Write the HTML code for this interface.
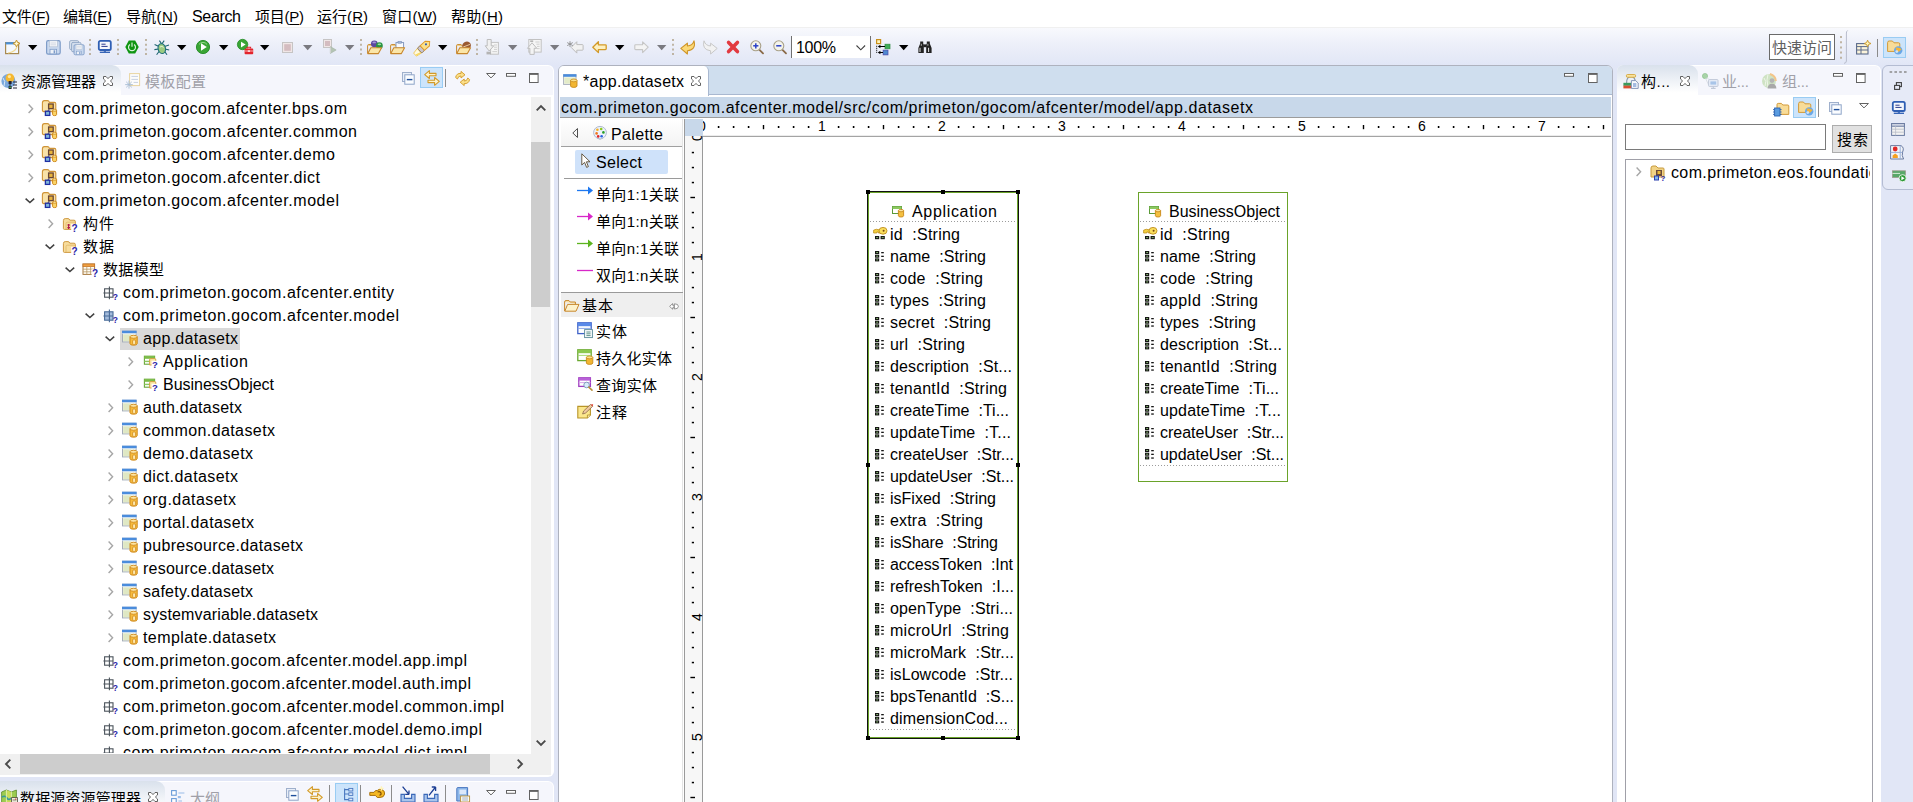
<!DOCTYPE html>
<html lang="zh"><head><meta charset="utf-8"><title>EOS Studio</title>
<style>
html,body{margin:0;padding:0;background:#e1e6f6;}
#root{position:relative;width:1913px;height:802px;overflow:hidden;background:#e1e6f6;font-family:"Liberation Sans","Noto Sans CJK SC",sans-serif;font-size:16px;color:#000;}
#root *{box-sizing:border-box;}
.a{position:absolute;}
.t{position:absolute;white-space:pre;}
svg{position:absolute;overflow:visible;}
u{text-decoration:underline;text-underline-offset:2px;}
</style></head><body><div id="root">
<div class="a" style="left:0px;top:0px;width:1913px;height:28px;background:#fff;border-bottom:1px solid #f0f0f0;"></div>
<span class="t" style="left:2px;top:6px;line-height:22px;font-size:15px;letter-spacing:-0.289px;">文件(<u>F</u>)</span>
<span class="t" style="left:63px;top:6px;line-height:22px;font-size:15px;letter-spacing:-0.250px;">编辑(<u>E</u>)</span>
<span class="t" style="left:126px;top:6px;line-height:22px;font-size:15px;letter-spacing:0.293px;">导航(<u>N</u>)</span>
<span class="t" style="left:192px;top:6px;line-height:22px;font-size:16px;letter-spacing:-0.341px;">Search</span>
<span class="t" style="left:255px;top:6px;line-height:22px;font-size:15px;letter-spacing:-0.250px;">项目(<u>P</u>)</span>
<span class="t" style="left:317px;top:6px;line-height:22px;font-size:15px;letter-spacing:0.043px;">运行(<u>R</u>)</span>
<span class="t" style="left:382px;top:6px;line-height:22px;font-size:15px;letter-spacing:0.211px;">窗口(<u>W</u>)</span>
<span class="t" style="left:451px;top:6px;line-height:22px;font-size:15px;letter-spacing:0.293px;">帮助(<u>H</u>)</span>
<div class="a" style="left:0px;top:28px;width:1913px;height:38px;background:linear-gradient(#f8f9fd 0%,#eceff9 45%,#e1e6f6 100%);"></div>
<svg style="left:5px;top:40px" width="16" height="15" viewBox="0 0 16 15"><rect x="0.6" y="2.6" width="13" height="11" fill="#f4f8fd" stroke="#a88a50" stroke-width="1.2"/><rect x="0.6" y="2.2" width="11" height="2.2" fill="#4a90d8"/><path d="M11.5 0 L12.6 2.4 L15 3.5 L12.6 4.6 L11.5 7 L10.4 4.6 L8 3.5 L10.4 2.4 Z" fill="#fff8d0" stroke="#c89628" stroke-width="1"/><path d="M3 13 Q10 12 12 7" fill="none" stroke="#f0d890" stroke-width="1.2"/></svg>
<svg style="left:28px;top:45px" width="10" height="6" viewBox="0 0 10 6"><path d="M0 0 H9.4 L4.7 5.2 Z" fill="#000"/></svg>
<svg style="left:46px;top:40px" width="15" height="15" viewBox="0 0 15 15"><g transform="translate(0,0) scale(1.0)"><rect x="0.6" y="0.6" width="13.6" height="13.6" rx="1.6" fill="#c9d8ee" stroke="#7e9cc8" stroke-width="1.2"/><rect x="3.3" y="0.8" width="8" height="6" fill="#f3f5f8" stroke="#aebcd0" stroke-width="0.6"/><path d="M4.5 3 H10 M4.5 4.8 H10" stroke="#c8d0dc" stroke-width="0.7"/><rect x="4" y="9.3" width="6.6" height="4.6" fill="#eef2f8" stroke="#7e9cc8" stroke-width="0.8"/><rect x="7.6" y="10.3" width="1.6" height="3" fill="#7e9cc8"/></g></svg>
<svg style="left:68.5px;top:40px" width="16" height="15" viewBox="0 0 16 15"><rect x="0.6" y="0.6" width="9" height="9" rx="1.4" fill="#dbe4f0" stroke="#9fb2cc" stroke-width="1"/><rect x="2.6" y="2.4" width="9.4" height="9.4" rx="1.4" fill="#d3deed" stroke="#93a9c8" stroke-width="1"/><g transform="translate(4.6,4.3) scale(0.74)"><rect x="0.6" y="0.6" width="13.6" height="13.6" rx="1.6" fill="#c9d8ee" stroke="#7e9cc8" stroke-width="1.2"/><rect x="3.3" y="0.8" width="8" height="6" fill="#f3f5f8" stroke="#aebcd0" stroke-width="0.6"/><path d="M4.5 3 H10 M4.5 4.8 H10" stroke="#c8d0dc" stroke-width="0.7"/><rect x="4" y="9.3" width="6.6" height="4.6" fill="#eef2f8" stroke="#7e9cc8" stroke-width="0.8"/><rect x="7.6" y="10.3" width="1.6" height="3" fill="#7e9cc8"/></g></svg>
<svg style="left:89px;top:39px" width="2" height="16" viewBox="0 0 2 16"><path d="M1 0 V16" stroke="#b4a78f" stroke-width="1.6" stroke-dasharray="2 2.7"/></svg>
<svg style="left:97.5px;top:40px" width="14" height="14" viewBox="0 0 14 14"><rect x="0.8" y="0.8" width="12" height="9.2" rx="1.6" fill="#f4f7fc" stroke="#2f5fb4" stroke-width="1.8"/><path d="M3.4 4.2 H7.6 M3.4 6.4 H9.6" stroke="#2a3a8c" stroke-width="1"/><path d="M5.8 10.6 H8 V11.8 H5.8Z" fill="#2f5fb4"/><path d="M1.8 12.3 H12" stroke="#2f5fb4" stroke-width="1.3"/></svg>
<svg style="left:117px;top:39px" width="2" height="16" viewBox="0 0 2 16"><path d="M1 0 V16" stroke="#b4a78f" stroke-width="1.6" stroke-dasharray="2 2.7"/></svg>
<svg style="left:124.5px;top:40px" width="14" height="14" viewBox="0 0 14 14"><path d="M3.8 0.6 H10.2 L13.7 7 L10.2 13.4 H3.8 L0.3 7 Z" fill="#0f9512"/><path d="M4.9 4.4 A3.5 3.5 0 1 0 9.1 4.4" fill="none" stroke="#d8f2d8" stroke-width="1.2"/><path d="M7 2.6 V6.8" stroke="#d8f2d8" stroke-width="1.2"/></svg>
<svg style="left:145px;top:39px" width="2" height="16" viewBox="0 0 2 16"><path d="M1 0 V16" stroke="#b4a78f" stroke-width="1.6" stroke-dasharray="2 2.7"/></svg>
<svg style="left:153.5px;top:39.5px" width="16" height="16" viewBox="0 0 16 16"><path d="M7.8 4 L5.4 0.6 M7.8 4 L10.2 0.6 M5 6.5 L0.6 4.6 M4.6 9 L0.4 9.6 M5 11.5 L2.6 14.8 M10.6 6.5 L15 5 M11 9 L15.2 10 M10.6 11.5 L13 14.8" stroke="#1c6470" stroke-width="1.1" fill="none"/><ellipse cx="7.8" cy="8.6" rx="3.7" ry="5" fill="#9ccb80" stroke="#23737c" stroke-width="1.1" transform="rotate(-14 7.8 8.6)"/><path d="M6 7 Q8 5.6 9.6 7.4" stroke="#e8f4d8" stroke-width="1" fill="none"/></svg>
<svg style="left:176.7px;top:45px" width="10" height="6" viewBox="0 0 10 6"><path d="M0 0 H9.4 L4.7 5.2 Z" fill="#000"/></svg>
<svg style="left:196px;top:40px" width="14" height="14" viewBox="0 0 14 14"><circle cx="7" cy="7" r="6.6" fill="#3aa535" stroke="#238b25" stroke-width="0.9"/><path d="M3 4.4 A5 5 0 0 1 11 4.4" stroke="#8fd688" stroke-width="1" fill="none"/><path d="M5 3.2 L10.8 7 L5 10.8 Z" fill="#fff"/></svg>
<svg style="left:218.5px;top:45px" width="10" height="6" viewBox="0 0 10 6"><path d="M0 0 H9.4 L4.7 5.2 Z" fill="#000"/></svg>
<svg style="left:236.5px;top:38.8px" width="17" height="16" viewBox="0 0 17 16"><circle cx="5.6" cy="5.5" r="5.2" fill="#3aa535" stroke="#238b25" stroke-width="0.8"/><path d="M4 2.8 L8.6 5.6 L4 8.4 Z" fill="#fff"/><rect x="7.6" y="9.6" width="8.6" height="5.6" rx="0.8" fill="#e3242c"/><path d="M10.2 9.6 V8.2 H13.6 V9.6" fill="none" stroke="#e3242c" stroke-width="1.1"/><path d="M7.6 12 H16.2" stroke="#ffd2d2" stroke-width="0.8"/><rect x="10.8" y="11.2" width="2.2" height="1.8" fill="#ffd2d2"/></svg>
<svg style="left:260.4px;top:45px" width="10" height="6" viewBox="0 0 10 6"><path d="M0 0 H9.4 L4.7 5.2 Z" fill="#000"/></svg>
<svg style="left:281.5px;top:42px" width="11" height="11" viewBox="0 0 11 11"><rect x="0.5" y="0.5" width="10" height="10" fill="#f0e6e6" stroke="#c6c4c4" stroke-width="1"/><rect x="2.2" y="2.2" width="6.6" height="6.6" fill="#d4bcc0"/></svg>
<svg style="left:303px;top:45px" width="10" height="6" viewBox="0 0 10 6"><path d="M0 0 H9.4 L4.7 5.2 Z" fill="#7a7a80"/></svg>
<svg style="left:323px;top:39px" width="15" height="15" viewBox="0 0 15 15"><rect x="0.5" y="0.5" width="8" height="8" fill="#f0e6e6" stroke="#c6c4c4" stroke-width="1"/><rect x="2" y="2" width="5" height="5" fill="#d4bcc0"/><path d="M7.4 7.6 L13.2 11 L7.4 14.4 Z" fill="#b4c4b4" stroke="#a4b4a4" stroke-width="0.6"/><path d="M7.4 8.4 V14" stroke="#d4d4d4" stroke-width="1"/></svg>
<svg style="left:344.7px;top:45px" width="10" height="6" viewBox="0 0 10 6"><path d="M0 0 H9.4 L4.7 5.2 Z" fill="#7a7a80"/></svg>
<svg style="left:360px;top:39px" width="2" height="16" viewBox="0 0 2 16"><path d="M1 0 V16" stroke="#b4a78f" stroke-width="1.6" stroke-dasharray="2 2.7"/></svg>
<svg style="left:367px;top:40.5px" width="16" height="14" viewBox="0 0 16 14"><path d="M0.6 4.6 Q0.6 3.6 1.6 3.6 H5.2 L6.4 5 H11.4 V7" fill="#f3d289" stroke="#c8872c" stroke-width="1"/><circle cx="7.3" cy="2.8" r="3.4" fill="#5c48a0"/><ellipse cx="7.2" cy="1.4" rx="1.8" ry="0.9" fill="#a898d8"/><circle cx="12.4" cy="4.7" r="3.4" fill="#2a9442"/><ellipse cx="12.4" cy="3.3" rx="1.8" ry="0.9" fill="#9fdca8"/><path d="M0.8 12.6 L3.8 6.8 H14.6 L11.4 12.6 Z" fill="#fbe6a8" stroke="#c8872c" stroke-width="1.1" stroke-linejoin="round"/><path d="M0.6 4.6 V12.4" stroke="#c8872c" stroke-width="1"/></svg>
<svg style="left:389.5px;top:40.5px" width="16" height="14" viewBox="0 0 16 14"><path d="M0.6 4.6 Q0.6 3.6 1.6 3.6 H5.2 L6.4 5 H11.4 V7" fill="#f3d289" stroke="#c8872c" stroke-width="1"/><rect x="6" y="1.6" width="7.6" height="5.6" fill="#f8fafc" stroke="#7a90b8" stroke-width="0.9"/><rect x="8" y="0.4" width="3.6" height="1.8" fill="#a8b8d8" stroke="#7a90b8" stroke-width="0.6"/><path d="M0.8 12.6 L3.8 6.8 H14.6 L11.4 12.6 Z" fill="#fbe6a8" stroke="#c8872c" stroke-width="1.1" stroke-linejoin="round"/><path d="M0.6 4.6 V12.4" stroke="#c8872c" stroke-width="1"/></svg>
<svg style="left:413.5px;top:39.5px" width="17" height="16" viewBox="0 0 17 16"><g transform="translate(1.3,14.4) rotate(-42) scale(0.93)"><path d="M-0.4 -2.2 L6 -3.3 V3.3 L-0.4 2.2 Z" fill="#fffbe0" stroke="#f0c040" stroke-width="0.8"/><path d="M0 1 L6 2.6" stroke="#f8d860" stroke-width="1.4"/><rect x="6" y="-3.6" width="4.2" height="7.2" rx="1.4" fill="#c9c5d2" stroke="#8a6a3a" stroke-width="0.8"/><path d="M10.2 -3.4 H17.4 L20.8 0 L17.4 3.4 H10.2 Z" fill="#fbe08a" stroke="#e09a28" stroke-width="1"/><circle cx="15.8" cy="-0.4" r="1.1" fill="#2858b8"/></g></svg>
<svg style="left:437.8px;top:45px" width="10" height="6" viewBox="0 0 10 6"><path d="M0 0 H9.4 L4.7 5.2 Z" fill="#000"/></svg>
<svg style="left:456px;top:40.5px" width="16" height="14" viewBox="0 0 16 14"><path d="M0.6 4.6 Q0.6 3.6 1.6 3.6 H5.2 L6.4 5 H11.4 V7" fill="#f3d289" stroke="#c8872c" stroke-width="1"/><ellipse cx="10.6" cy="4.6" rx="4.4" ry="4" fill="#9a5a32" transform="rotate(-25 10.6 4.6)"/><path d="M7.2 6 L14 3.4" stroke="#e8c8a0" stroke-width="1"/><path d="M0.8 12.6 L3.8 6.8 H14.6 L11.4 12.6 Z" fill="#fbe6a8" stroke="#c8872c" stroke-width="1.1" stroke-linejoin="round"/><path d="M0.6 4.6 V12.4" stroke="#c8872c" stroke-width="1"/></svg>
<svg style="left:476px;top:39px" width="2" height="16" viewBox="0 0 2 16"><path d="M1 0 V16" stroke="#b4a78f" stroke-width="1.6" stroke-dasharray="2 2.7"/></svg>
<svg style="left:485px;top:39px" width="14" height="16" viewBox="0 0 14 16"><rect x="5.6" y="3.4" width="7.8" height="11.8" fill="#f6f6f6" stroke="#c2c2c2" stroke-width="1"/><path d="M9 6 H12 M9 8.2 H12 M9 10.4 H12 M7.4 12.6 H12" stroke="#cccccc" stroke-width="0.9"/><path d="M2.2 0.5 H6.2 V6.8 H8.8 L4.2 12 L0.2 6.8 H2.2 Z" fill="#f0f0f0" stroke="#b8b8b8" stroke-width="0.9" stroke-linejoin="round"/><rect x="1.5" y="12.7" width="4.4" height="2.7" fill="#b4b4b4"/></svg>
<svg style="left:507.7px;top:45px" width="10" height="6" viewBox="0 0 10 6"><path d="M0 0 H9.4 L4.7 5.2 Z" fill="#7a7a80"/></svg>
<svg style="left:526.5px;top:39px" width="15" height="16" viewBox="0 0 15 16"><rect x="1.8" y="0.5" width="12.4" height="12.6" fill="#f6f6f6" stroke="#c2c2c2" stroke-width="1"/><path d="M8.4 3 H12.6 M9.4 5.2 H12.6 M10 7.4 H12.6 M10 9.6 H12.6" stroke="#cccccc" stroke-width="0.9"/><rect x="3.2" y="1.4" width="3" height="1.6" fill="#b4b4b4"/><path d="M5 3.8 L9.8 9.3 H7.2 V15.4 H2.9 V9.3 H0.5 Z" fill="#f4f4f4" stroke="#b8b8b8" stroke-width="0.9" stroke-linejoin="round"/></svg>
<svg style="left:550.1px;top:45px" width="10" height="6" viewBox="0 0 10 6"><path d="M0 0 H9.4 L4.7 5.2 Z" fill="#7a7a80"/></svg>
<svg style="left:566.5px;top:40.5px" width="17" height="13" viewBox="0 0 17 13"><path d="M4.2 6.4 L9.8 0.7 V3.6 H15.4 Q16.1 3.6 16.1 4.3 V8.5 Q16.1 9.2 15.4 9.2 H9.8 V12.1 Z" fill="#f2f2f2" stroke="#bdbdbd" stroke-width="1" stroke-linejoin="round"/><path d="M3 0.2 V6 M0.2 1.6 L5.8 4.6 M5.8 1.6 L0.2 4.6" stroke="#8c8c8c" stroke-width="0.9"/></svg>
<svg style="left:591.5px;top:40.5px" width="15" height="13" viewBox="0 0 15 13"><path d="M0.8 6.2 L6.4 0.8 V3.8 H13.4 Q14.2 3.8 14.2 4.6 V7.8 Q14.2 8.6 13.4 8.6 H6.4 V11.6 Z" fill="#fdf0c0" stroke="#d39a28" stroke-width="1.3" stroke-linejoin="round"/></svg>
<svg style="left:614.8px;top:45px" width="10" height="6" viewBox="0 0 10 6"><path d="M0 0 H9.4 L4.7 5.2 Z" fill="#000"/></svg>
<svg style="left:634px;top:40.5px" width="15" height="13" viewBox="0 0 15 13"><path d="M14.2 6.2 L8.6 0.8 V3.8 H1.6 Q0.8 3.8 0.8 4.6 V7.8 Q0.8 8.6 1.6 8.6 H8.6 V11.6 Z" fill="#f4f4f4" stroke="#c6c6c6" stroke-width="1.1" stroke-linejoin="round"/></svg>
<svg style="left:656.7px;top:45px" width="10" height="6" viewBox="0 0 10 6"><path d="M0 0 H9.4 L4.7 5.2 Z" fill="#7a7a80"/></svg>
<svg style="left:672px;top:39px" width="2" height="16" viewBox="0 0 2 16"><path d="M1 0 V16" stroke="#b4a78f" stroke-width="1.6" stroke-dasharray="2 2.7"/></svg>
<svg style="left:679.5px;top:39.5px" width="16" height="15" viewBox="0 0 16 15"><path d="M0.8 8.4 L7.4 3.2 V6 Q12.6 5.6 14 0.8 Q16.4 9.6 7.4 10.8 V14 Z" fill="#fbd978" stroke="#cf9528" stroke-width="1.1" stroke-linejoin="round"/></svg>
<svg style="left:701.5px;top:39.5px" width="16" height="15" viewBox="0 0 16 15"><path d="M15.2 8.4 L8.6 3.2 V6 Q3.4 5.6 2 0.8 Q-0.4 9.6 8.6 10.8 V14 Z" fill="#f2f2f2" stroke="#c8c8c8" stroke-width="1" stroke-linejoin="round"/></svg>
<svg style="left:726px;top:40px" width="14" height="14" viewBox="0 0 14 14"><path d="M2.6 2.4 L11.4 11.6 M11.4 2.4 L2.6 11.6" stroke="#e23a40" stroke-width="3.6" stroke-linecap="round"/></svg>
<svg style="left:749.7px;top:39.9px" width="14" height="14" viewBox="0 0 14 14"><path d="M9 9.4 L13 13.4" stroke="#8a6a48" stroke-width="1.8" stroke-linecap="round"/><circle cx="5.8" cy="5.8" r="5" fill="#f4f4ec" stroke="#a8a088" stroke-width="1.1"/><path d="M3.2 5.8 H8.4" stroke="#2a40c8" stroke-width="1.5"/><path d="M5.8 3.2 V8.4" stroke="#2a40c8" stroke-width="1.5"/></svg>
<svg style="left:772.9px;top:39.9px" width="14" height="14" viewBox="0 0 14 14"><path d="M9 9.4 L13 13.4" stroke="#8a6a48" stroke-width="1.8" stroke-linecap="round"/><circle cx="5.8" cy="5.8" r="5" fill="#f4f4ec" stroke="#a8a088" stroke-width="1.1"/><path d="M3.2 5.8 H8.4" stroke="#2a40c8" stroke-width="1.5"/></svg>
<div class="a" style="left:791px;top:36px;width:80px;height:22px;background:#fff;border-left:1px solid #707070;border-right:1px solid #707070;"></div>
<span class="t" style="left:796px;top:36.5px;line-height:22px;font-size:16px;letter-spacing:-0.307px;">100%</span>
<svg style="left:856px;top:45px" width="10" height="6" viewBox="0 0 10 6"><path d="M0.5 0.5 L4.8 4.8 L9.1 0.5" fill="none" stroke="#404040" stroke-width="1.1"/></svg>
<svg style="left:876px;top:39px" width="15" height="16" viewBox="0 0 15 16"><rect x="0.6" y="0.6" width="4" height="4" fill="#fff3b8" stroke="#c8901c" stroke-width="1.2"/><rect x="9" y="5.2" width="5" height="4.6" fill="#3fae58" stroke="#2f8a40" stroke-width="0.7"/><rect x="7.1" y="11.1" width="4.9" height="4.8" fill="#4f8ad0" stroke="#4848a8" stroke-width="0.7"/><path d="M0.7 6.8 V14.6" stroke="#000" stroke-width="1" stroke-dasharray="1 1"/><path d="M9 7.5 H3.6 M7 13.5 H3.6" stroke="#000" stroke-width="1.1"/><path d="M1.8 7.5 L4.4 5.8 V9.2 Z M1.8 13.5 L4.4 11.8 V15.2 Z" fill="#000"/></svg>
<svg style="left:898.7px;top:45px" width="10" height="6" viewBox="0 0 10 6"><path d="M0 0 H9.4 L4.7 5.2 Z" fill="#000"/></svg>
<svg style="left:917.5px;top:41px" width="14" height="12" viewBox="0 0 14 12"><path d="M0.4 12 V7 L2.2 2.6 V0.4 H5.2 V2.6 L5.8 4 V12 Z M13.6 12 V7 L11.8 2.6 V0.4 H8.8 V2.6 L8.2 4 V12 Z" fill="#222"/><rect x="5.4" y="3.4" width="3.2" height="2.8" fill="#222"/><path d="M2 6.8 V11 M10.6 6.8 V11" stroke="#fff" stroke-width="0.9"/><path d="M3.3 2.8 V4.8 M9.9 2.8 V4.8" stroke="#eee" stroke-width="0.7"/></svg>
<div class="a" style="left:1769px;top:34px;width:66px;height:26px;background:#fff;border:1px solid #6a6a6a;"></div>
<span class="t" style="left:1772px;top:37px;line-height:22px;font-size:15px;letter-spacing:-0.005px;color:#606060;">快速访问</span>
<svg style="left:1840px;top:36px" width="2" height="24" viewBox="0 0 2 24"><path d="M1 0 V24" stroke="#b4a78f" stroke-width="1.6" stroke-dasharray="2 3.2"/></svg>
<svg style="left:1843px;top:30px" width="6" height="34" viewBox="0 0 6 34"><path d="M4.6 0.5 Q3.4 1.4 3.4 3 V31 Q3.4 33 1 33.4" fill="none" stroke="#b8bccc" stroke-width="1"/></svg>
<svg style="left:1856px;top:40px" width="16" height="15" viewBox="0 0 16 15"><rect x="0.6" y="3.6" width="11.4" height="10.4" fill="#fbf3da" stroke="#5a6a8a" stroke-width="1.1"/><path d="M0.6 6.6 H12 M0.6 10 H12 M5 6.6 V14" stroke="#5a6a8a" stroke-width="1"/><path d="M11.6 0.2 L12.6 2.5 L15 3.5 L12.6 4.5 L11.6 6.8 L10.6 4.5 L8.2 3.5 L10.6 2.5 Z" fill="#fff4b8" stroke="#c89628" stroke-width="0.9"/></svg>
<div class="a" style="left:1877px;top:39px;width:1px;height:18px;background:#8a8a8a;"></div>
<div class="a" style="left:1883px;top:37px;width:23px;height:21px;background:#cce4fb;border:1px solid #99ccf3;"></div>
<div class="a" style="left:0px;top:65px;width:554px;height:712px;background:#fff;border-radius:0 6px 6px 0;"></div>
<div class="a" style="left:0px;top:66px;width:553px;height:29px;background:#f5f6fc;border-radius:0 5px 0 0;"></div>
<div class="a" style="left:0px;top:65px;width:121px;height:30px;background:linear-gradient(#d9e1ec,#fff 92%);border-radius:0 9px 0 0;"></div>
<span class="t" style="left:21px;top:71px;line-height:22px;font-size:15px;letter-spacing:-0.004px;">资源管理器</span>
<span class="t" style="left:145px;top:71px;line-height:22px;font-size:15px;letter-spacing:0.328px;color:#a0a0a8;">模板配置</span>
<div class="a" style="left:0;top:96px;width:531px;height:657px;overflow:hidden;">
<svg style="left:27.8px;top:7.7px" width="6" height="10" viewBox="0 0 6 10"><path d="M0.6 0.6 L4.6 4.8 L0.6 9" fill="none" stroke="#a6a6a6" stroke-width="1.4"/></svg>
<svg style="left:41px;top:4.0px" width="18" height="16" viewBox="0 0 18 16"><path d="M1.4 3 Q1.4 0.6 3.4 0.6 H6.4 Q8 0.6 8.4 2.4 H13.4 Q14.8 2.4 14.8 3.8 V10 Q14.8 11.6 13.4 11.6 H2.8 Q1.4 11.6 1.4 10 Z" fill="#f9e2a8" stroke="#cf9438" stroke-width="1.1"/><path d="M9 8 L6.6 11.4" stroke="#3a3a6a" stroke-width="1"/><rect x="7.6" y="4" width="4.6" height="4.6" fill="#e8b43c" stroke="#6a4634" stroke-width="1.3"/><rect x="4.4" y="11.2" width="4.4" height="4.2" fill="#7fb4d8" stroke="#1f2fa4" stroke-width="1.3"/><path d="M11.6 10.4 V14.6 Q11.6 15.6 13.6 15.6 Q15.6 15.6 15.6 14.6 V10.4 Z" fill="#fbd468" stroke="#cf8a1c" stroke-width="1"/><ellipse cx="13.6" cy="10.2" rx="2" ry="1" fill="#fdeeb8" stroke="#cf8a1c" stroke-width="0.9"/></svg>
<span class="t" style="left:63px;top:1px;line-height:23px;font-size:16px;letter-spacing:0.494px;">com.primeton.gocom.afcenter.bps.om</span>
<svg style="left:27.8px;top:30.7px" width="6" height="10" viewBox="0 0 6 10"><path d="M0.6 0.6 L4.6 4.8 L0.6 9" fill="none" stroke="#a6a6a6" stroke-width="1.4"/></svg>
<svg style="left:41px;top:27.0px" width="18" height="16" viewBox="0 0 18 16"><path d="M1.4 3 Q1.4 0.6 3.4 0.6 H6.4 Q8 0.6 8.4 2.4 H13.4 Q14.8 2.4 14.8 3.8 V10 Q14.8 11.6 13.4 11.6 H2.8 Q1.4 11.6 1.4 10 Z" fill="#f9e2a8" stroke="#cf9438" stroke-width="1.1"/><path d="M9 8 L6.6 11.4" stroke="#3a3a6a" stroke-width="1"/><rect x="7.6" y="4" width="4.6" height="4.6" fill="#e8b43c" stroke="#6a4634" stroke-width="1.3"/><rect x="4.4" y="11.2" width="4.4" height="4.2" fill="#7fb4d8" stroke="#1f2fa4" stroke-width="1.3"/><path d="M11.6 10.4 V14.6 Q11.6 15.6 13.6 15.6 Q15.6 15.6 15.6 14.6 V10.4 Z" fill="#fbd468" stroke="#cf8a1c" stroke-width="1"/><ellipse cx="13.6" cy="10.2" rx="2" ry="1" fill="#fdeeb8" stroke="#cf8a1c" stroke-width="0.9"/></svg>
<span class="t" style="left:63px;top:24px;line-height:23px;font-size:16px;letter-spacing:0.528px;">com.primeton.gocom.afcenter.common</span>
<svg style="left:27.8px;top:53.7px" width="6" height="10" viewBox="0 0 6 10"><path d="M0.6 0.6 L4.6 4.8 L0.6 9" fill="none" stroke="#a6a6a6" stroke-width="1.4"/></svg>
<svg style="left:41px;top:50.0px" width="18" height="16" viewBox="0 0 18 16"><path d="M1.4 3 Q1.4 0.6 3.4 0.6 H6.4 Q8 0.6 8.4 2.4 H13.4 Q14.8 2.4 14.8 3.8 V10 Q14.8 11.6 13.4 11.6 H2.8 Q1.4 11.6 1.4 10 Z" fill="#f9e2a8" stroke="#cf9438" stroke-width="1.1"/><path d="M9 8 L6.6 11.4" stroke="#3a3a6a" stroke-width="1"/><rect x="7.6" y="4" width="4.6" height="4.6" fill="#e8b43c" stroke="#6a4634" stroke-width="1.3"/><rect x="4.4" y="11.2" width="4.4" height="4.2" fill="#7fb4d8" stroke="#1f2fa4" stroke-width="1.3"/><path d="M11.6 10.4 V14.6 Q11.6 15.6 13.6 15.6 Q15.6 15.6 15.6 14.6 V10.4 Z" fill="#fbd468" stroke="#cf8a1c" stroke-width="1"/><ellipse cx="13.6" cy="10.2" rx="2" ry="1" fill="#fdeeb8" stroke="#cf8a1c" stroke-width="0.9"/></svg>
<span class="t" style="left:63px;top:47px;line-height:23px;font-size:16px;letter-spacing:0.541px;">com.primeton.gocom.afcenter.demo</span>
<svg style="left:27.8px;top:76.7px" width="6" height="10" viewBox="0 0 6 10"><path d="M0.6 0.6 L4.6 4.8 L0.6 9" fill="none" stroke="#a6a6a6" stroke-width="1.4"/></svg>
<svg style="left:41px;top:73.0px" width="18" height="16" viewBox="0 0 18 16"><path d="M1.4 3 Q1.4 0.6 3.4 0.6 H6.4 Q8 0.6 8.4 2.4 H13.4 Q14.8 2.4 14.8 3.8 V10 Q14.8 11.6 13.4 11.6 H2.8 Q1.4 11.6 1.4 10 Z" fill="#f9e2a8" stroke="#cf9438" stroke-width="1.1"/><path d="M9 8 L6.6 11.4" stroke="#3a3a6a" stroke-width="1"/><rect x="7.6" y="4" width="4.6" height="4.6" fill="#e8b43c" stroke="#6a4634" stroke-width="1.3"/><rect x="4.4" y="11.2" width="4.4" height="4.2" fill="#7fb4d8" stroke="#1f2fa4" stroke-width="1.3"/><path d="M11.6 10.4 V14.6 Q11.6 15.6 13.6 15.6 Q15.6 15.6 15.6 14.6 V10.4 Z" fill="#fbd468" stroke="#cf8a1c" stroke-width="1"/><ellipse cx="13.6" cy="10.2" rx="2" ry="1" fill="#fdeeb8" stroke="#cf8a1c" stroke-width="0.9"/></svg>
<span class="t" style="left:63px;top:70px;line-height:23px;font-size:16px;letter-spacing:0.545px;">com.primeton.gocom.afcenter.dict</span>
<svg style="left:24.5px;top:102.3px" width="10" height="6" viewBox="0 0 10 6"><path d="M0.6 0.6 L4.9 4.6 L9.2 0.6" fill="none" stroke="#404040" stroke-width="1.5"/></svg>
<svg style="left:41px;top:96.0px" width="18" height="16" viewBox="0 0 18 16"><path d="M1.4 3 Q1.4 0.6 3.4 0.6 H6.4 Q8 0.6 8.4 2.4 H13.4 Q14.8 2.4 14.8 3.8 V10 Q14.8 11.6 13.4 11.6 H2.8 Q1.4 11.6 1.4 10 Z" fill="#f9e2a8" stroke="#cf9438" stroke-width="1.1"/><path d="M9 8 L6.6 11.4" stroke="#3a3a6a" stroke-width="1"/><rect x="7.6" y="4" width="4.6" height="4.6" fill="#e8b43c" stroke="#6a4634" stroke-width="1.3"/><rect x="4.4" y="11.2" width="4.4" height="4.2" fill="#7fb4d8" stroke="#1f2fa4" stroke-width="1.3"/><path d="M11.6 10.4 V14.6 Q11.6 15.6 13.6 15.6 Q15.6 15.6 15.6 14.6 V10.4 Z" fill="#fbd468" stroke="#cf8a1c" stroke-width="1"/><ellipse cx="13.6" cy="10.2" rx="2" ry="1" fill="#fdeeb8" stroke="#cf8a1c" stroke-width="0.9"/></svg>
<span class="t" style="left:63px;top:93px;line-height:23px;font-size:16px;letter-spacing:0.538px;">com.primeton.gocom.afcenter.model</span>
<svg style="left:47.8px;top:122.7px" width="6" height="10" viewBox="0 0 6 10"><path d="M0.6 0.6 L4.6 4.8 L0.6 9" fill="none" stroke="#a6a6a6" stroke-width="1.4"/></svg>
<svg style="left:61px;top:120.5px" width="18" height="16" viewBox="0 0 18 16"><path d="M2.4 3.6 Q2.4 1.6 4.2 1.6 H7 Q8.4 1.6 8.8 3.2 H13 Q14.4 3.2 14.4 4.6 V11.4 Q14.4 12.4 13.4 12.4 H3.4 Q2.4 12.4 2.4 11.4 Z" fill="#f7dc9c" stroke="#cf9a44" stroke-width="1"/><path d="M5 12 V6.4 Q5 5.2 6.2 5.2 H14.4" fill="none" stroke="#e0b868" stroke-width="0.8"/><path d="M6.4 8 H9 M6.4 10.6 H9 M7.6 7 V12" stroke="#b0184a" stroke-width="1.1" fill="none"/><rect x="10.2" y="6.9" width="6.6" height="8" fill="#fff"/><text x="10.5" y="14.5" font-size="10" font-family="Liberation Sans,sans-serif" font-weight="bold" fill="#2a23a8">?</text></svg>
<span class="t" style="left:83px;top:116px;line-height:23px;font-size:15px;letter-spacing:0.984px;">构件</span>
<svg style="left:44.5px;top:148.3px" width="10" height="6" viewBox="0 0 10 6"><path d="M0.6 0.6 L4.9 4.6 L9.2 0.6" fill="none" stroke="#404040" stroke-width="1.5"/></svg>
<svg style="left:61px;top:143.5px" width="18" height="16" viewBox="0 0 18 16"><path d="M2.4 3.6 Q2.4 1.6 4.2 1.6 H7 Q8.4 1.6 8.8 3.2 H13 Q14.4 3.2 14.4 4.6 V11.4 Q14.4 12.4 13.4 12.4 H3.4 Q2.4 12.4 2.4 11.4 Z" fill="#f7dc9c" stroke="#cf9a44" stroke-width="1"/><path d="M5 12 V6.4 Q5 5.2 6.2 5.2 H14.4" fill="none" stroke="#e0b868" stroke-width="0.8"/><rect x="10.2" y="6.9" width="6.6" height="8" fill="#fff"/><text x="10.5" y="14.5" font-size="10" font-family="Liberation Sans,sans-serif" font-weight="bold" fill="#2a23a8">?</text></svg>
<span class="t" style="left:83px;top:139px;line-height:23px;font-size:15px;letter-spacing:0.984px;">数据</span>
<svg style="left:64.5px;top:171.3px" width="10" height="6" viewBox="0 0 10 6"><path d="M0.6 0.6 L4.9 4.6 L9.2 0.6" fill="none" stroke="#404040" stroke-width="1.5"/></svg>
<svg style="left:81px;top:165.5px" width="18" height="16" viewBox="0 0 18 16"><rect x="2" y="2" width="11.6" height="10.4" fill="#fffdf4" stroke="#a8783c" stroke-width="1"/><rect x="2" y="2" width="11.6" height="2.6" fill="#f0a040" stroke="#c87828" stroke-width="0.8"/><path d="M2 7.2 H13.6 M2 9.8 H13.6 M5.8 4.6 V12.4 M9.6 4.6 V12.4" stroke="#b89868" stroke-width="0.8"/><rect x="10.6" y="7.2" width="6.6" height="8" fill="#fff"/><text x="10.9" y="14.8" font-size="10" font-family="Liberation Sans,sans-serif" font-weight="bold" fill="#2a23a8">?</text></svg>
<span class="t" style="left:103px;top:162px;line-height:23px;font-size:15px;letter-spacing:0.328px;">数据模型</span>
<svg style="left:101px;top:188.5px" width="18" height="16" viewBox="0 0 18 16"><rect x="3.6" y="3.8" width="8.4" height="8.4" fill="none" stroke="#4c545c" stroke-width="1.1"/><path d="M8.4 1.6 V14.2 M2.4 8 H12" stroke="#4c545c" stroke-width="1.1"/><text x="11.700000000000001" y="15.2" font-size="8.5" font-family="Liberation Sans,sans-serif" font-weight="bold" fill="#2a23a8">?</text></svg>
<span class="t" style="left:123px;top:185px;line-height:23px;font-size:16px;letter-spacing:0.532px;">com.primeton.gocom.afcenter.entity</span>
<svg style="left:84.5px;top:217.3px" width="10" height="6" viewBox="0 0 10 6"><path d="M0.6 0.6 L4.9 4.6 L9.2 0.6" fill="none" stroke="#404040" stroke-width="1.5"/></svg>
<svg style="left:101px;top:211.5px" width="18" height="16" viewBox="0 0 18 16"><rect x="3.6" y="3.8" width="8.4" height="8.4" fill="#a4bcdc" stroke="#4a6c98" stroke-width="1.1"/><path d="M8.4 1.6 V14.2 M2.4 8 H12" stroke="#4a6c98" stroke-width="1.1"/><text x="11.700000000000001" y="15.2" font-size="8.5" font-family="Liberation Sans,sans-serif" font-weight="bold" fill="#2a23a8">?</text></svg>
<span class="t" style="left:123px;top:208px;line-height:23px;font-size:16px;letter-spacing:0.538px;">com.primeton.gocom.afcenter.model</span>
<div class="a" style="left:120px;top:231.5px;width:120px;height:22px;background:#d9d9d9;"></div>
<svg style="left:104.5px;top:240.3px" width="10" height="6" viewBox="0 0 10 6"><path d="M0.6 0.6 L4.9 4.6 L9.2 0.6" fill="none" stroke="#404040" stroke-width="1.5"/></svg>
<svg style="left:121px;top:234.5px" width="18" height="16" viewBox="0 0 18 16"><rect x="1.5" y="0.3" width="13.6" height="10.6" fill="#f7f9ee" stroke="#a4acb8" stroke-width="1"/><rect x="1" y="-0.3" width="14.6" height="2.4" fill="#4a8cdc"/><path d="M1 2.6 H15.6" stroke="#bcd4f0" stroke-width="0.8"/><rect x="2.2" y="3.4" width="8" height="6.8" fill="#dfe8c4"/><path d="M9 5.8 V12.6 Q9 14.2 12.6 14.2 Q16.2 14.2 16.2 12.6 V5.8 Z" fill="#f7bc3c" stroke="#d08a1c" stroke-width="1"/><ellipse cx="12.6" cy="5.8" rx="3.6" ry="1.5" fill="#fde4a0" stroke="#d08a1c" stroke-width="0.9"/><rect x="11.6" y="9" width="3" height="4.4" rx="1" fill="#fde9b0" stroke="#d08a1c" stroke-width="0.8"/></svg>
<span class="t" style="left:143px;top:231px;line-height:23px;font-size:16px;letter-spacing:0.307px;">app.datasetx</span>
<svg style="left:127.8px;top:260.7px" width="6" height="10" viewBox="0 0 6 10"><path d="M0.6 0.6 L4.6 4.8 L0.6 9" fill="none" stroke="#a6a6a6" stroke-width="1.4"/></svg>
<svg style="left:141px;top:257.5px" width="18" height="16" viewBox="0 0 18 16"><rect x="3.4" y="2.2" width="10.2" height="8" fill="#fff" stroke="#6aa838" stroke-width="1.1"/><rect x="3.4" y="2.2" width="10.2" height="2.6" fill="#7cbc48"/><path d="M3.4 7.4 H13.6" stroke="#8cc860" stroke-width="1.4"/><path d="M8.6 5.6 Q8.6 4.6 9.8 4.6 H13.6 Q14.8 4.6 14.8 5.8 V11 H8.6 Z" fill="#fbe6a8" stroke="#d39a38" stroke-width="0.9"/><rect x="10.6" y="6.8" width="6.6" height="8" fill="#fff"/><text x="10.9" y="14.399999999999999" font-size="9.5" font-family="Liberation Sans,sans-serif" font-weight="bold" fill="#2a23a8">?</text></svg>
<span class="t" style="left:163px;top:254px;line-height:23px;font-size:16px;letter-spacing:0.672px;">Application</span>
<svg style="left:127.8px;top:283.7px" width="6" height="10" viewBox="0 0 6 10"><path d="M0.6 0.6 L4.6 4.8 L0.6 9" fill="none" stroke="#a6a6a6" stroke-width="1.4"/></svg>
<svg style="left:141px;top:280.5px" width="18" height="16" viewBox="0 0 18 16"><rect x="3.4" y="2.2" width="10.2" height="8" fill="#fff" stroke="#6aa838" stroke-width="1.1"/><rect x="3.4" y="2.2" width="10.2" height="2.6" fill="#7cbc48"/><path d="M3.4 7.4 H13.6" stroke="#8cc860" stroke-width="1.4"/><path d="M8.6 5.6 Q8.6 4.6 9.8 4.6 H13.6 Q14.8 4.6 14.8 5.8 V11 H8.6 Z" fill="#fbe6a8" stroke="#d39a38" stroke-width="0.9"/><rect x="10.6" y="6.8" width="6.6" height="8" fill="#fff"/><text x="10.9" y="14.399999999999999" font-size="9.5" font-family="Liberation Sans,sans-serif" font-weight="bold" fill="#2a23a8">?</text></svg>
<span class="t" style="left:163px;top:277px;line-height:23px;font-size:16px;letter-spacing:-0.013px;">BusinessObject</span>
<svg style="left:107.8px;top:306.7px" width="6" height="10" viewBox="0 0 6 10"><path d="M0.6 0.6 L4.6 4.8 L0.6 9" fill="none" stroke="#a6a6a6" stroke-width="1.4"/></svg>
<svg style="left:121px;top:303.5px" width="18" height="16" viewBox="0 0 18 16"><rect x="1.5" y="0.3" width="13.6" height="10.6" fill="#f7f9ee" stroke="#a4acb8" stroke-width="1"/><rect x="1" y="-0.3" width="14.6" height="2.4" fill="#4a8cdc"/><path d="M1 2.6 H15.6" stroke="#bcd4f0" stroke-width="0.8"/><rect x="2.2" y="3.4" width="8" height="6.8" fill="#dfe8c4"/><path d="M9 5.8 V12.6 Q9 14.2 12.6 14.2 Q16.2 14.2 16.2 12.6 V5.8 Z" fill="#f7bc3c" stroke="#d08a1c" stroke-width="1"/><ellipse cx="12.6" cy="5.8" rx="3.6" ry="1.5" fill="#fde4a0" stroke="#d08a1c" stroke-width="0.9"/><rect x="11.6" y="9" width="3" height="4.4" rx="1" fill="#fde9b0" stroke="#d08a1c" stroke-width="0.8"/></svg>
<span class="t" style="left:143px;top:300px;line-height:23px;font-size:16px;letter-spacing:0.243px;">auth.datasetx</span>
<svg style="left:107.8px;top:329.7px" width="6" height="10" viewBox="0 0 6 10"><path d="M0.6 0.6 L4.6 4.8 L0.6 9" fill="none" stroke="#a6a6a6" stroke-width="1.4"/></svg>
<svg style="left:121px;top:326.5px" width="18" height="16" viewBox="0 0 18 16"><rect x="1.5" y="0.3" width="13.6" height="10.6" fill="#f7f9ee" stroke="#a4acb8" stroke-width="1"/><rect x="1" y="-0.3" width="14.6" height="2.4" fill="#4a8cdc"/><path d="M1 2.6 H15.6" stroke="#bcd4f0" stroke-width="0.8"/><rect x="2.2" y="3.4" width="8" height="6.8" fill="#dfe8c4"/><path d="M9 5.8 V12.6 Q9 14.2 12.6 14.2 Q16.2 14.2 16.2 12.6 V5.8 Z" fill="#f7bc3c" stroke="#d08a1c" stroke-width="1"/><ellipse cx="12.6" cy="5.8" rx="3.6" ry="1.5" fill="#fde4a0" stroke="#d08a1c" stroke-width="0.9"/><rect x="11.6" y="9" width="3" height="4.4" rx="1" fill="#fde9b0" stroke="#d08a1c" stroke-width="0.8"/></svg>
<span class="t" style="left:143px;top:323px;line-height:23px;font-size:16px;letter-spacing:0.408px;">common.datasetx</span>
<svg style="left:107.8px;top:352.7px" width="6" height="10" viewBox="0 0 6 10"><path d="M0.6 0.6 L4.6 4.8 L0.6 9" fill="none" stroke="#a6a6a6" stroke-width="1.4"/></svg>
<svg style="left:121px;top:349.5px" width="18" height="16" viewBox="0 0 18 16"><rect x="1.5" y="0.3" width="13.6" height="10.6" fill="#f7f9ee" stroke="#a4acb8" stroke-width="1"/><rect x="1" y="-0.3" width="14.6" height="2.4" fill="#4a8cdc"/><path d="M1 2.6 H15.6" stroke="#bcd4f0" stroke-width="0.8"/><rect x="2.2" y="3.4" width="8" height="6.8" fill="#dfe8c4"/><path d="M9 5.8 V12.6 Q9 14.2 12.6 14.2 Q16.2 14.2 16.2 12.6 V5.8 Z" fill="#f7bc3c" stroke="#d08a1c" stroke-width="1"/><ellipse cx="12.6" cy="5.8" rx="3.6" ry="1.5" fill="#fde4a0" stroke="#d08a1c" stroke-width="0.9"/><rect x="11.6" y="9" width="3" height="4.4" rx="1" fill="#fde9b0" stroke="#d08a1c" stroke-width="0.8"/></svg>
<span class="t" style="left:143px;top:346px;line-height:23px;font-size:16px;letter-spacing:0.421px;">demo.datasetx</span>
<svg style="left:107.8px;top:375.7px" width="6" height="10" viewBox="0 0 6 10"><path d="M0.6 0.6 L4.6 4.8 L0.6 9" fill="none" stroke="#a6a6a6" stroke-width="1.4"/></svg>
<svg style="left:121px;top:372.5px" width="18" height="16" viewBox="0 0 18 16"><rect x="1.5" y="0.3" width="13.6" height="10.6" fill="#f7f9ee" stroke="#a4acb8" stroke-width="1"/><rect x="1" y="-0.3" width="14.6" height="2.4" fill="#4a8cdc"/><path d="M1 2.6 H15.6" stroke="#bcd4f0" stroke-width="0.8"/><rect x="2.2" y="3.4" width="8" height="6.8" fill="#dfe8c4"/><path d="M9 5.8 V12.6 Q9 14.2 12.6 14.2 Q16.2 14.2 16.2 12.6 V5.8 Z" fill="#f7bc3c" stroke="#d08a1c" stroke-width="1"/><ellipse cx="12.6" cy="5.8" rx="3.6" ry="1.5" fill="#fde4a0" stroke="#d08a1c" stroke-width="0.9"/><rect x="11.6" y="9" width="3" height="4.4" rx="1" fill="#fde9b0" stroke="#d08a1c" stroke-width="0.8"/></svg>
<span class="t" style="left:143px;top:369px;line-height:23px;font-size:16px;letter-spacing:0.431px;">dict.datasetx</span>
<svg style="left:107.8px;top:398.7px" width="6" height="10" viewBox="0 0 6 10"><path d="M0.6 0.6 L4.6 4.8 L0.6 9" fill="none" stroke="#a6a6a6" stroke-width="1.4"/></svg>
<svg style="left:121px;top:395.5px" width="18" height="16" viewBox="0 0 18 16"><rect x="1.5" y="0.3" width="13.6" height="10.6" fill="#f7f9ee" stroke="#a4acb8" stroke-width="1"/><rect x="1" y="-0.3" width="14.6" height="2.4" fill="#4a8cdc"/><path d="M1 2.6 H15.6" stroke="#bcd4f0" stroke-width="0.8"/><rect x="2.2" y="3.4" width="8" height="6.8" fill="#dfe8c4"/><path d="M9 5.8 V12.6 Q9 14.2 12.6 14.2 Q16.2 14.2 16.2 12.6 V5.8 Z" fill="#f7bc3c" stroke="#d08a1c" stroke-width="1"/><ellipse cx="12.6" cy="5.8" rx="3.6" ry="1.5" fill="#fde4a0" stroke="#d08a1c" stroke-width="0.9"/><rect x="11.6" y="9" width="3" height="4.4" rx="1" fill="#fde9b0" stroke="#d08a1c" stroke-width="0.8"/></svg>
<span class="t" style="left:143px;top:392px;line-height:23px;font-size:16px;letter-spacing:0.449px;">org.datasetx</span>
<svg style="left:107.8px;top:421.7px" width="6" height="10" viewBox="0 0 6 10"><path d="M0.6 0.6 L4.6 4.8 L0.6 9" fill="none" stroke="#a6a6a6" stroke-width="1.4"/></svg>
<svg style="left:121px;top:418.5px" width="18" height="16" viewBox="0 0 18 16"><rect x="1.5" y="0.3" width="13.6" height="10.6" fill="#f7f9ee" stroke="#a4acb8" stroke-width="1"/><rect x="1" y="-0.3" width="14.6" height="2.4" fill="#4a8cdc"/><path d="M1 2.6 H15.6" stroke="#bcd4f0" stroke-width="0.8"/><rect x="2.2" y="3.4" width="8" height="6.8" fill="#dfe8c4"/><path d="M9 5.8 V12.6 Q9 14.2 12.6 14.2 Q16.2 14.2 16.2 12.6 V5.8 Z" fill="#f7bc3c" stroke="#d08a1c" stroke-width="1"/><ellipse cx="12.6" cy="5.8" rx="3.6" ry="1.5" fill="#fde4a0" stroke="#d08a1c" stroke-width="0.9"/><rect x="11.6" y="9" width="3" height="4.4" rx="1" fill="#fde9b0" stroke="#d08a1c" stroke-width="0.8"/></svg>
<span class="t" style="left:143px;top:415px;line-height:23px;font-size:16px;letter-spacing:0.432px;">portal.datasetx</span>
<svg style="left:107.8px;top:444.7px" width="6" height="10" viewBox="0 0 6 10"><path d="M0.6 0.6 L4.6 4.8 L0.6 9" fill="none" stroke="#a6a6a6" stroke-width="1.4"/></svg>
<svg style="left:121px;top:441.5px" width="18" height="16" viewBox="0 0 18 16"><rect x="1.5" y="0.3" width="13.6" height="10.6" fill="#f7f9ee" stroke="#a4acb8" stroke-width="1"/><rect x="1" y="-0.3" width="14.6" height="2.4" fill="#4a8cdc"/><path d="M1 2.6 H15.6" stroke="#bcd4f0" stroke-width="0.8"/><rect x="2.2" y="3.4" width="8" height="6.8" fill="#dfe8c4"/><path d="M9 5.8 V12.6 Q9 14.2 12.6 14.2 Q16.2 14.2 16.2 12.6 V5.8 Z" fill="#f7bc3c" stroke="#d08a1c" stroke-width="1"/><ellipse cx="12.6" cy="5.8" rx="3.6" ry="1.5" fill="#fde4a0" stroke="#d08a1c" stroke-width="0.9"/><rect x="11.6" y="9" width="3" height="4.4" rx="1" fill="#fde9b0" stroke="#d08a1c" stroke-width="0.8"/></svg>
<span class="t" style="left:143px;top:438px;line-height:23px;font-size:16px;letter-spacing:0.322px;">pubresource.datasetx</span>
<svg style="left:107.8px;top:467.7px" width="6" height="10" viewBox="0 0 6 10"><path d="M0.6 0.6 L4.6 4.8 L0.6 9" fill="none" stroke="#a6a6a6" stroke-width="1.4"/></svg>
<svg style="left:121px;top:464.5px" width="18" height="16" viewBox="0 0 18 16"><rect x="1.5" y="0.3" width="13.6" height="10.6" fill="#f7f9ee" stroke="#a4acb8" stroke-width="1"/><rect x="1" y="-0.3" width="14.6" height="2.4" fill="#4a8cdc"/><path d="M1 2.6 H15.6" stroke="#bcd4f0" stroke-width="0.8"/><rect x="2.2" y="3.4" width="8" height="6.8" fill="#dfe8c4"/><path d="M9 5.8 V12.6 Q9 14.2 12.6 14.2 Q16.2 14.2 16.2 12.6 V5.8 Z" fill="#f7bc3c" stroke="#d08a1c" stroke-width="1"/><ellipse cx="12.6" cy="5.8" rx="3.6" ry="1.5" fill="#fde4a0" stroke="#d08a1c" stroke-width="0.9"/><rect x="11.6" y="9" width="3" height="4.4" rx="1" fill="#fde9b0" stroke="#d08a1c" stroke-width="0.8"/></svg>
<span class="t" style="left:143px;top:461px;line-height:23px;font-size:16px;letter-spacing:0.238px;">resource.datasetx</span>
<svg style="left:107.8px;top:490.7px" width="6" height="10" viewBox="0 0 6 10"><path d="M0.6 0.6 L4.6 4.8 L0.6 9" fill="none" stroke="#a6a6a6" stroke-width="1.4"/></svg>
<svg style="left:121px;top:487.5px" width="18" height="16" viewBox="0 0 18 16"><rect x="1.5" y="0.3" width="13.6" height="10.6" fill="#f7f9ee" stroke="#a4acb8" stroke-width="1"/><rect x="1" y="-0.3" width="14.6" height="2.4" fill="#4a8cdc"/><path d="M1 2.6 H15.6" stroke="#bcd4f0" stroke-width="0.8"/><rect x="2.2" y="3.4" width="8" height="6.8" fill="#dfe8c4"/><path d="M9 5.8 V12.6 Q9 14.2 12.6 14.2 Q16.2 14.2 16.2 12.6 V5.8 Z" fill="#f7bc3c" stroke="#d08a1c" stroke-width="1"/><ellipse cx="12.6" cy="5.8" rx="3.6" ry="1.5" fill="#fde4a0" stroke="#d08a1c" stroke-width="0.9"/><rect x="11.6" y="9" width="3" height="4.4" rx="1" fill="#fde9b0" stroke="#d08a1c" stroke-width="0.8"/></svg>
<span class="t" style="left:143px;top:484px;line-height:23px;font-size:16px;letter-spacing:0.254px;">safety.datasetx</span>
<svg style="left:107.8px;top:513.7px" width="6" height="10" viewBox="0 0 6 10"><path d="M0.6 0.6 L4.6 4.8 L0.6 9" fill="none" stroke="#a6a6a6" stroke-width="1.4"/></svg>
<svg style="left:121px;top:510.5px" width="18" height="16" viewBox="0 0 18 16"><rect x="1.5" y="0.3" width="13.6" height="10.6" fill="#f7f9ee" stroke="#a4acb8" stroke-width="1"/><rect x="1" y="-0.3" width="14.6" height="2.4" fill="#4a8cdc"/><path d="M1 2.6 H15.6" stroke="#bcd4f0" stroke-width="0.8"/><rect x="2.2" y="3.4" width="8" height="6.8" fill="#dfe8c4"/><path d="M9 5.8 V12.6 Q9 14.2 12.6 14.2 Q16.2 14.2 16.2 12.6 V5.8 Z" fill="#f7bc3c" stroke="#d08a1c" stroke-width="1"/><ellipse cx="12.6" cy="5.8" rx="3.6" ry="1.5" fill="#fde4a0" stroke="#d08a1c" stroke-width="0.9"/><rect x="11.6" y="9" width="3" height="4.4" rx="1" fill="#fde9b0" stroke="#d08a1c" stroke-width="0.8"/></svg>
<span class="t" style="left:143px;top:507px;line-height:23px;font-size:16px;letter-spacing:0.153px;">systemvariable.datasetx</span>
<svg style="left:107.8px;top:536.7px" width="6" height="10" viewBox="0 0 6 10"><path d="M0.6 0.6 L4.6 4.8 L0.6 9" fill="none" stroke="#a6a6a6" stroke-width="1.4"/></svg>
<svg style="left:121px;top:533.5px" width="18" height="16" viewBox="0 0 18 16"><rect x="1.5" y="0.3" width="13.6" height="10.6" fill="#f7f9ee" stroke="#a4acb8" stroke-width="1"/><rect x="1" y="-0.3" width="14.6" height="2.4" fill="#4a8cdc"/><path d="M1 2.6 H15.6" stroke="#bcd4f0" stroke-width="0.8"/><rect x="2.2" y="3.4" width="8" height="6.8" fill="#dfe8c4"/><path d="M9 5.8 V12.6 Q9 14.2 12.6 14.2 Q16.2 14.2 16.2 12.6 V5.8 Z" fill="#f7bc3c" stroke="#d08a1c" stroke-width="1"/><ellipse cx="12.6" cy="5.8" rx="3.6" ry="1.5" fill="#fde4a0" stroke="#d08a1c" stroke-width="0.9"/><rect x="11.6" y="9" width="3" height="4.4" rx="1" fill="#fde9b0" stroke="#d08a1c" stroke-width="0.8"/></svg>
<span class="t" style="left:143px;top:530px;line-height:23px;font-size:16px;letter-spacing:0.419px;">template.datasetx</span>
<svg style="left:101px;top:556.5px" width="18" height="16" viewBox="0 0 18 16"><rect x="3.6" y="3.8" width="8.4" height="8.4" fill="none" stroke="#4c545c" stroke-width="1.1"/><path d="M8.4 1.6 V14.2 M2.4 8 H12" stroke="#4c545c" stroke-width="1.1"/><text x="11.700000000000001" y="15.2" font-size="8.5" font-family="Liberation Sans,sans-serif" font-weight="bold" fill="#2a23a8">?</text></svg>
<span class="t" style="left:123px;top:553px;line-height:23px;font-size:16px;letter-spacing:0.495px;">com.primeton.gocom.afcenter.model.app.impl</span>
<svg style="left:101px;top:579.5px" width="18" height="16" viewBox="0 0 18 16"><rect x="3.6" y="3.8" width="8.4" height="8.4" fill="none" stroke="#4c545c" stroke-width="1.1"/><path d="M8.4 1.6 V14.2 M2.4 8 H12" stroke="#4c545c" stroke-width="1.1"/><text x="11.700000000000001" y="15.2" font-size="8.5" font-family="Liberation Sans,sans-serif" font-weight="bold" fill="#2a23a8">?</text></svg>
<span class="t" style="left:123px;top:576px;line-height:23px;font-size:16px;letter-spacing:0.472px;">com.primeton.gocom.afcenter.model.auth.impl</span>
<svg style="left:101px;top:602.5px" width="18" height="16" viewBox="0 0 18 16"><rect x="3.6" y="3.8" width="8.4" height="8.4" fill="none" stroke="#4c545c" stroke-width="1.1"/><path d="M8.4 1.6 V14.2 M2.4 8 H12" stroke="#4c545c" stroke-width="1.1"/><text x="11.700000000000001" y="15.2" font-size="8.5" font-family="Liberation Sans,sans-serif" font-weight="bold" fill="#2a23a8">?</text></svg>
<span class="t" style="left:123px;top:599px;line-height:23px;font-size:16px;letter-spacing:0.514px;">com.primeton.gocom.afcenter.model.common.impl</span>
<svg style="left:101px;top:625.5px" width="18" height="16" viewBox="0 0 18 16"><rect x="3.6" y="3.8" width="8.4" height="8.4" fill="none" stroke="#4c545c" stroke-width="1.1"/><path d="M8.4 1.6 V14.2 M2.4 8 H12" stroke="#4c545c" stroke-width="1.1"/><text x="11.700000000000001" y="15.2" font-size="8.5" font-family="Liberation Sans,sans-serif" font-weight="bold" fill="#2a23a8">?</text></svg>
<span class="t" style="left:123px;top:622px;line-height:23px;font-size:16px;letter-spacing:0.523px;">com.primeton.gocom.afcenter.model.demo.impl</span>
<svg style="left:101px;top:648.5px" width="18" height="16" viewBox="0 0 18 16"><rect x="3.6" y="3.8" width="8.4" height="8.4" fill="none" stroke="#4c545c" stroke-width="1.1"/><path d="M8.4 1.6 V14.2 M2.4 8 H12" stroke="#4c545c" stroke-width="1.1"/><text x="11.700000000000001" y="15.2" font-size="8.5" font-family="Liberation Sans,sans-serif" font-weight="bold" fill="#2a23a8">?</text></svg>
<span class="t" style="left:123px;top:645px;line-height:23px;font-size:16px;letter-spacing:0.526px;">com.primeton.gocom.afcenter.model.dict.impl</span>
</div>
<div class="a" style="left:531px;top:97px;width:20px;height:657px;background:#f0f0f0;"></div>
<div class="a" style="left:531px;top:142px;width:19px;height:165px;background:#cdcdcd;"></div>
<svg style="left:536px;top:104.5px" width="10" height="6" viewBox="0 0 10 6"><path d="M0.7 5.3 L5 1 L9.3 5.3" fill="none" stroke="#4a4a4a" stroke-width="1.9"/></svg>
<svg style="left:535.5px;top:739.5px" width="10" height="6" viewBox="0 0 10 6"><path d="M0.7 0.7 L5 5 L9.3 0.7" fill="none" stroke="#4a4a4a" stroke-width="1.9"/></svg>
<div class="a" style="left:0px;top:754px;width:551px;height:21px;background:#f0f0f0;"></div>
<div class="a" style="left:20px;top:754px;width:470px;height:20px;background:#cdcdcd;"></div>
<svg style="left:5px;top:759px" width="6" height="10" viewBox="0 0 6 10"><path d="M5.3 0.7 L1 5 L5.3 9.3" fill="none" stroke="#4a4a4a" stroke-width="1.9"/></svg>
<svg style="left:516.5px;top:759px" width="6" height="10" viewBox="0 0 6 10"><path d="M0.7 0.7 L5 5 L0.7 9.3" fill="none" stroke="#4a4a4a" stroke-width="1.9"/></svg>
<div class="a" style="left:0px;top:781px;width:554px;height:30px;background:#fff;border-radius:0 6px 0 0;"></div>
<div class="a" style="left:0px;top:782px;width:553px;height:30px;background:#f5f6fc;border-radius:0 5px 0 0;"></div>
<div class="a" style="left:0px;top:781px;width:165px;height:30px;background:linear-gradient(#d9e1ec,#fff 92%);border-radius:0 9px 0 0;"></div>
<span class="t" style="left:20px;top:787.5px;line-height:22px;font-size:15px;letter-spacing:0.141px;">数据源资源管理器</span>
<span class="t" style="left:190px;top:787.5px;line-height:22px;font-size:15px;letter-spacing:-0.016px;color:#a0a0a8;">大纲</span>
<div class="a" style="left:558px;top:65px;width:1055px;height:750px;background:#fff;border:1px solid #aeb2be;border-radius:6px 6px 0 0;"></div>
<div class="a" style="left:559px;top:66px;width:1053px;height:29px;background:#cfdeee;border-radius:5px 5px 0 0;border-bottom:1px solid #a9b8d0;"></div>
<div class="a" style="left:559px;top:66px;width:150px;height:30px;background:#fff;border-radius:5px 5px 0 0;border-right:1px solid #a9b8d0;"></div>
<span class="t" style="left:583px;top:71px;line-height:22px;font-size:16px;letter-spacing:0.262px;">*app.datasetx</span>
<div class="a" style="left:560px;top:97px;width:1051px;height:20px;background:#c8d8ea;"></div>
<div class="a" style="left:560px;top:117px;width:1051px;height:1px;background:#9c9c9c;"></div>
<div class="a" style="left:560px;top:118px;width:1051px;height:1px;background:#fff;"></div>
<span class="t" style="left:561px;top:97px;line-height:21px;font-size:16px;letter-spacing:0.569px;">com.primeton.gocom.afcenter.model/src/com/primeton/gocom/afcenter/model/app.datasetx</span>
<div class="a" style="left:561px;top:119px;width:121px;height:27px;background:linear-gradient(#fff,#f3f3f3);"></div>
<div class="a" style="left:561px;top:146px;width:121px;height:1px;background:#a0a0a0;"></div>
<div class="a" style="left:682px;top:119px;width:1px;height:700px;background:#e4e4e4;"></div>
<svg style="left:572px;top:128px" width="6" height="10" viewBox="0 0 6 10"><path d="M5.5 0.5 L0.8 5 L5.5 9.5 Z" fill="none" stroke="#505050" stroke-width="1"/></svg>
<span class="t" style="left:611px;top:123.5px;line-height:22px;font-size:16px;letter-spacing:0.365px;">Palette</span>
<div class="a" style="left:575px;top:150px;width:93px;height:24px;background:#cfe2fa;border-radius:2px;"></div>
<span class="t" style="left:596px;top:152px;line-height:22px;font-size:16px;letter-spacing:0.306px;">Select</span>
<div class="a" style="left:564px;top:178px;width:118px;height:1px;background:#9a9a9a;"></div>
<span class="t" style="left:596px;top:184px;line-height:22px;font-size:15px;letter-spacing:0.357px;">单向1:1关联</span>
<span class="t" style="left:596px;top:211px;line-height:22px;font-size:15px;letter-spacing:0.357px;">单向1:n关联</span>
<span class="t" style="left:596px;top:238px;line-height:22px;font-size:15px;letter-spacing:0.357px;">单向n:1关联</span>
<span class="t" style="left:596px;top:265px;line-height:22px;font-size:15px;letter-spacing:0.357px;">双向1:n关联</span>
<div class="a" style="left:561px;top:292px;width:122px;height:1px;background:#9a9a9a;"></div>
<div class="a" style="left:561px;top:293px;width:121px;height:24px;background:#efefef;"></div>
<span class="t" style="left:582px;top:295px;line-height:22px;font-size:15px;letter-spacing:0.984px;">基本</span>
<span class="t" style="left:596px;top:321px;line-height:22px;font-size:15px;letter-spacing:0.984px;">实体</span>
<span class="t" style="left:596px;top:348px;line-height:22px;font-size:15px;letter-spacing:0.246px;">持久化实体</span>
<span class="t" style="left:596px;top:375px;line-height:22px;font-size:15px;letter-spacing:0.328px;">查询实体</span>
<span class="t" style="left:596px;top:402px;line-height:22px;font-size:15px;letter-spacing:0.984px;">注释</span>
<div class="a" style="left:684px;top:119px;width:1px;height:700px;background:#9a9a9a;"></div>
<div class="a" style="left:685px;top:119px;width:17px;height:700px;background:#f7f7f7;"></div>
<div class="a" style="left:702px;top:136px;width:1px;height:700px;background:#9a9a9a;"></div>
<div class="a" style="left:685px;top:119px;width:18px;height:17px;background:#c8d8ea;"></div>
<div class="a" style="left:703px;top:119px;width:908px;height:17px;background:#fff;"></div>
<div class="a" style="left:703px;top:135px;width:908px;height:1px;background:#ececec;"></div>
<div class="a" style="left:703px;top:136px;width:908px;height:1px;background:#a4a4a4;"></div>
<svg style="left:703px;top:119px" width="908" height="17" viewBox="0 0 908 17"><rect x="14.8" y="7" width="1.6" height="2" fill="#000"/><rect x="29.8" y="7" width="1.6" height="2" fill="#000"/><rect x="44.8" y="7" width="1.6" height="2" fill="#000"/><rect x="59.8" y="6" width="1.4" height="4.2" fill="#000"/><rect x="74.8" y="7" width="1.6" height="2" fill="#000"/><rect x="89.8" y="7" width="1.6" height="2" fill="#000"/><rect x="104.8" y="7" width="1.6" height="2" fill="#000"/><rect x="134.8" y="7" width="1.6" height="2" fill="#000"/><rect x="149.8" y="7" width="1.6" height="2" fill="#000"/><rect x="164.8" y="7" width="1.6" height="2" fill="#000"/><rect x="179.8" y="6" width="1.4" height="4.2" fill="#000"/><rect x="194.8" y="7" width="1.6" height="2" fill="#000"/><rect x="209.8" y="7" width="1.6" height="2" fill="#000"/><rect x="224.8" y="7" width="1.6" height="2" fill="#000"/><rect x="254.8" y="7" width="1.6" height="2" fill="#000"/><rect x="269.8" y="7" width="1.6" height="2" fill="#000"/><rect x="284.8" y="7" width="1.6" height="2" fill="#000"/><rect x="299.8" y="6" width="1.4" height="4.2" fill="#000"/><rect x="314.8" y="7" width="1.6" height="2" fill="#000"/><rect x="329.8" y="7" width="1.6" height="2" fill="#000"/><rect x="344.8" y="7" width="1.6" height="2" fill="#000"/><rect x="374.8" y="7" width="1.6" height="2" fill="#000"/><rect x="389.8" y="7" width="1.6" height="2" fill="#000"/><rect x="404.8" y="7" width="1.6" height="2" fill="#000"/><rect x="419.8" y="6" width="1.4" height="4.2" fill="#000"/><rect x="434.8" y="7" width="1.6" height="2" fill="#000"/><rect x="449.8" y="7" width="1.6" height="2" fill="#000"/><rect x="464.8" y="7" width="1.6" height="2" fill="#000"/><rect x="494.8" y="7" width="1.6" height="2" fill="#000"/><rect x="509.8" y="7" width="1.6" height="2" fill="#000"/><rect x="524.8" y="7" width="1.6" height="2" fill="#000"/><rect x="539.8" y="6" width="1.4" height="4.2" fill="#000"/><rect x="554.8" y="7" width="1.6" height="2" fill="#000"/><rect x="569.8" y="7" width="1.6" height="2" fill="#000"/><rect x="584.8" y="7" width="1.6" height="2" fill="#000"/><rect x="614.8" y="7" width="1.6" height="2" fill="#000"/><rect x="629.8" y="7" width="1.6" height="2" fill="#000"/><rect x="644.8" y="7" width="1.6" height="2" fill="#000"/><rect x="659.8" y="6" width="1.4" height="4.2" fill="#000"/><rect x="674.8" y="7" width="1.6" height="2" fill="#000"/><rect x="689.8" y="7" width="1.6" height="2" fill="#000"/><rect x="704.8" y="7" width="1.6" height="2" fill="#000"/><rect x="734.8" y="7" width="1.6" height="2" fill="#000"/><rect x="749.8" y="7" width="1.6" height="2" fill="#000"/><rect x="764.8" y="7" width="1.6" height="2" fill="#000"/><rect x="779.8" y="6" width="1.4" height="4.2" fill="#000"/><rect x="794.8" y="7" width="1.6" height="2" fill="#000"/><rect x="809.8" y="7" width="1.6" height="2" fill="#000"/><rect x="824.8" y="7" width="1.6" height="2" fill="#000"/><rect x="854.8" y="7" width="1.6" height="2" fill="#000"/><rect x="869.8" y="7" width="1.6" height="2" fill="#000"/><rect x="884.8" y="7" width="1.6" height="2" fill="#000"/><rect x="899.8" y="6" width="1.4" height="4.2" fill="#000"/></svg>
<span class="t" style="left:698px;top:118px;line-height:16px;font-size:14px;">0</span>
<span class="t" style="left:818px;top:118px;line-height:16px;font-size:14px;">1</span>
<span class="t" style="left:938px;top:118px;line-height:16px;font-size:14px;">2</span>
<span class="t" style="left:1058px;top:118px;line-height:16px;font-size:14px;">3</span>
<span class="t" style="left:1178px;top:118px;line-height:16px;font-size:14px;">4</span>
<span class="t" style="left:1298px;top:118px;line-height:16px;font-size:14px;">5</span>
<span class="t" style="left:1418px;top:118px;line-height:16px;font-size:14px;">6</span>
<span class="t" style="left:1538px;top:118px;line-height:16px;font-size:14px;">7</span>
<svg style="left:685px;top:137px" width="17" height="670" viewBox="0 0 17 670"><rect x="6.8" y="14.8" width="2.2" height="1.5" fill="#000"/><rect x="6.8" y="29.8" width="2.2" height="1.5" fill="#000"/><rect x="6.8" y="44.8" width="2.2" height="1.5" fill="#000"/><rect x="5.4" y="59.8" width="4.6" height="1.4" fill="#000"/><rect x="6.8" y="74.8" width="2.2" height="1.5" fill="#000"/><rect x="6.8" y="89.8" width="2.2" height="1.5" fill="#000"/><rect x="6.8" y="104.8" width="2.2" height="1.5" fill="#000"/><rect x="6.8" y="134.8" width="2.2" height="1.5" fill="#000"/><rect x="6.8" y="149.8" width="2.2" height="1.5" fill="#000"/><rect x="6.8" y="164.8" width="2.2" height="1.5" fill="#000"/><rect x="5.4" y="179.8" width="4.6" height="1.4" fill="#000"/><rect x="6.8" y="194.8" width="2.2" height="1.5" fill="#000"/><rect x="6.8" y="209.8" width="2.2" height="1.5" fill="#000"/><rect x="6.8" y="224.8" width="2.2" height="1.5" fill="#000"/><rect x="6.8" y="254.8" width="2.2" height="1.5" fill="#000"/><rect x="6.8" y="269.8" width="2.2" height="1.5" fill="#000"/><rect x="6.8" y="284.8" width="2.2" height="1.5" fill="#000"/><rect x="5.4" y="299.8" width="4.6" height="1.4" fill="#000"/><rect x="6.8" y="314.8" width="2.2" height="1.5" fill="#000"/><rect x="6.8" y="329.8" width="2.2" height="1.5" fill="#000"/><rect x="6.8" y="344.8" width="2.2" height="1.5" fill="#000"/><rect x="6.8" y="374.8" width="2.2" height="1.5" fill="#000"/><rect x="6.8" y="389.8" width="2.2" height="1.5" fill="#000"/><rect x="6.8" y="404.8" width="2.2" height="1.5" fill="#000"/><rect x="5.4" y="419.8" width="4.6" height="1.4" fill="#000"/><rect x="6.8" y="434.8" width="2.2" height="1.5" fill="#000"/><rect x="6.8" y="449.8" width="2.2" height="1.5" fill="#000"/><rect x="6.8" y="464.8" width="2.2" height="1.5" fill="#000"/><rect x="6.8" y="494.8" width="2.2" height="1.5" fill="#000"/><rect x="6.8" y="509.8" width="2.2" height="1.5" fill="#000"/><rect x="6.8" y="524.8" width="2.2" height="1.5" fill="#000"/><rect x="5.4" y="539.8" width="4.6" height="1.4" fill="#000"/><rect x="6.8" y="554.8" width="2.2" height="1.5" fill="#000"/><rect x="6.8" y="569.8" width="2.2" height="1.5" fill="#000"/><rect x="6.8" y="584.8" width="2.2" height="1.5" fill="#000"/><rect x="6.8" y="614.8" width="2.2" height="1.5" fill="#000"/><rect x="6.8" y="629.8" width="2.2" height="1.5" fill="#000"/><rect x="6.8" y="644.8" width="2.2" height="1.5" fill="#000"/><rect x="5.4" y="659.8" width="4.6" height="1.4" fill="#000"/><rect x="6.8" y="674.8" width="2.2" height="1.5" fill="#000"/></svg>
<span class="t" style="left:693px;top:129px;line-height:16px;font-size:14px;transform:rotate(-90deg);transform-origin:4px 8px;">0</span>
<span class="t" style="left:693px;top:249px;line-height:16px;font-size:14px;transform:rotate(-90deg);transform-origin:4px 8px;">1</span>
<span class="t" style="left:693px;top:369px;line-height:16px;font-size:14px;transform:rotate(-90deg);transform-origin:4px 8px;">2</span>
<span class="t" style="left:693px;top:489px;line-height:16px;font-size:14px;transform:rotate(-90deg);transform-origin:4px 8px;">3</span>
<span class="t" style="left:693px;top:609px;line-height:16px;font-size:14px;transform:rotate(-90deg);transform-origin:4px 8px;">4</span>
<span class="t" style="left:693px;top:729px;line-height:16px;font-size:14px;transform:rotate(-90deg);transform-origin:4px 8px;">5</span>
<div class="a" style="left:685px;top:119px;width:18px;height:17px;background:#c8d8ea;"></div>
<div class="a" style="left:867px;top:191px;width:152px;height:548px;border:1px solid #111;background:#fff;"></div>
<div class="a" style="left:868px;top:192px;width:150px;height:546px;border:1px solid #6aa32a;"></div>
<div class="a" style="left:870px;top:221px;width:147px;height:1px;background:repeating-linear-gradient(90deg,#9c9c9c 0 1px,transparent 1px 3px);"></div>
<div class="a" style="left:870px;top:729px;width:147px;height:1px;background:repeating-linear-gradient(90deg,#9c9c9c 0 1px,transparent 1px 3px);"></div>
<svg style="left:892px;top:205px" width="14" height="13" viewBox="0 0 14 13"><rect x="0.5" y="1.5" width="9" height="7" fill="#fff" stroke="#5a9a38" stroke-width="1"/><rect x="0.5" y="1.5" width="9" height="2.5" fill="#8cc860"/><path d="M6.4 5.6 V10.8 Q6.4 12 9 12 Q11.6 12 11.6 10.8 V5.6 Z" fill="#f4c040" stroke="#c88818" stroke-width="0.9"/><ellipse cx="9" cy="5.6" rx="2.6" ry="1.2" fill="#fde4a0" stroke="#c88818" stroke-width="0.8"/></svg>
<span class="t" style="left:912px;top:200.5px;line-height:22px;font-size:16px;letter-spacing:0.672px;">Application</span>
<div class="a" style="left:870px;top:222px;width:147px;height:507px;overflow:hidden;">
<svg style="left:2.5px;top:5px" width="15" height="13" viewBox="0 0 15 13"><path d="M0.6 3.2 Q3 1.4 7 3 V6 H5.4 V5 H3.8 V6 H0.6 Z" fill="#f4d040" stroke="#c09020" stroke-width="0.8"/><ellipse cx="10" cy="3.8" rx="4" ry="3.4" fill="#fade5c" stroke="#c09020" stroke-width="0.9"/><circle cx="10.6" cy="3.8" r="1" fill="#7a4a10"/><rect x="2" y="9" width="4.2" height="3.2" fill="#161616"/><rect x="3.1" y="10.1" width="2" height="1" fill="#7fae6a"/><rect x="7.6" y="9" width="4.2" height="3.2" fill="#161616"/><rect x="8.7" y="10.1" width="2" height="1" fill="#7fae6a"/></svg>
<span class="t" style="left:20px;top:2px;line-height:22px;font-size:16px;letter-spacing:0.241px;">id  :String</span>
<svg style="left:5px;top:29.4px" width="10" height="11" viewBox="0 0 10 11"><rect x="0" y="0.0" width="4.2" height="3" fill="#161616"/><rect x="1.2" y="1.0" width="1.8" height="1" fill="#7fae6a"/><rect x="6.2" y="1.0" width="2.6" height="1.3" fill="#161616"/><rect x="0" y="3.7" width="4.2" height="3" fill="#161616"/><rect x="1.2" y="4.7" width="1.8" height="1" fill="#7fae6a"/><rect x="6.2" y="4.7" width="2.6" height="1.3" fill="#161616"/><rect x="0" y="7.4" width="4.2" height="3" fill="#161616"/><rect x="1.2" y="8.4" width="1.8" height="1" fill="#7fae6a"/><rect x="6.2" y="8.4" width="2.6" height="1.3" fill="#161616"/></svg>
<span class="t" style="left:20px;top:24px;line-height:22px;font-size:16px;letter-spacing:0.070px;">name  :String</span>
<svg style="left:5px;top:51.4px" width="10" height="11" viewBox="0 0 10 11"><rect x="0" y="0.0" width="4.2" height="3" fill="#161616"/><rect x="1.2" y="1.0" width="1.8" height="1" fill="#7fae6a"/><rect x="6.2" y="1.0" width="2.6" height="1.3" fill="#161616"/><rect x="0" y="3.7" width="4.2" height="3" fill="#161616"/><rect x="1.2" y="4.7" width="1.8" height="1" fill="#7fae6a"/><rect x="6.2" y="4.7" width="2.6" height="1.3" fill="#161616"/><rect x="0" y="7.4" width="4.2" height="3" fill="#161616"/><rect x="1.2" y="8.4" width="1.8" height="1" fill="#7fae6a"/><rect x="6.2" y="8.4" width="2.6" height="1.3" fill="#161616"/></svg>
<span class="t" style="left:20px;top:46px;line-height:22px;font-size:16px;letter-spacing:0.264px;">code  :String</span>
<svg style="left:5px;top:73.4px" width="10" height="11" viewBox="0 0 10 11"><rect x="0" y="0.0" width="4.2" height="3" fill="#161616"/><rect x="1.2" y="1.0" width="1.8" height="1" fill="#7fae6a"/><rect x="6.2" y="1.0" width="2.6" height="1.3" fill="#161616"/><rect x="0" y="3.7" width="4.2" height="3" fill="#161616"/><rect x="1.2" y="4.7" width="1.8" height="1" fill="#7fae6a"/><rect x="6.2" y="4.7" width="2.6" height="1.3" fill="#161616"/><rect x="0" y="7.4" width="4.2" height="3" fill="#161616"/><rect x="1.2" y="8.4" width="1.8" height="1" fill="#7fae6a"/><rect x="6.2" y="8.4" width="2.6" height="1.3" fill="#161616"/></svg>
<span class="t" style="left:20px;top:68px;line-height:22px;font-size:16px;letter-spacing:0.202px;">types  :String</span>
<svg style="left:5px;top:95.4px" width="10" height="11" viewBox="0 0 10 11"><rect x="0" y="0.0" width="4.2" height="3" fill="#161616"/><rect x="1.2" y="1.0" width="1.8" height="1" fill="#7fae6a"/><rect x="6.2" y="1.0" width="2.6" height="1.3" fill="#161616"/><rect x="0" y="3.7" width="4.2" height="3" fill="#161616"/><rect x="1.2" y="4.7" width="1.8" height="1" fill="#7fae6a"/><rect x="6.2" y="4.7" width="2.6" height="1.3" fill="#161616"/><rect x="0" y="7.4" width="4.2" height="3" fill="#161616"/><rect x="1.2" y="8.4" width="1.8" height="1" fill="#7fae6a"/><rect x="6.2" y="8.4" width="2.6" height="1.3" fill="#161616"/></svg>
<span class="t" style="left:20px;top:90px;line-height:22px;font-size:16px;letter-spacing:0.164px;">secret  :String</span>
<svg style="left:5px;top:117.4px" width="10" height="11" viewBox="0 0 10 11"><rect x="0" y="0.0" width="4.2" height="3" fill="#161616"/><rect x="1.2" y="1.0" width="1.8" height="1" fill="#7fae6a"/><rect x="6.2" y="1.0" width="2.6" height="1.3" fill="#161616"/><rect x="0" y="3.7" width="4.2" height="3" fill="#161616"/><rect x="1.2" y="4.7" width="1.8" height="1" fill="#7fae6a"/><rect x="6.2" y="4.7" width="2.6" height="1.3" fill="#161616"/><rect x="0" y="7.4" width="4.2" height="3" fill="#161616"/><rect x="1.2" y="8.4" width="1.8" height="1" fill="#7fae6a"/><rect x="6.2" y="8.4" width="2.6" height="1.3" fill="#161616"/></svg>
<span class="t" style="left:20px;top:112px;line-height:22px;font-size:16px;letter-spacing:0.189px;">url  :String</span>
<svg style="left:5px;top:139.4px" width="10" height="11" viewBox="0 0 10 11"><rect x="0" y="0.0" width="4.2" height="3" fill="#161616"/><rect x="1.2" y="1.0" width="1.8" height="1" fill="#7fae6a"/><rect x="6.2" y="1.0" width="2.6" height="1.3" fill="#161616"/><rect x="0" y="3.7" width="4.2" height="3" fill="#161616"/><rect x="1.2" y="4.7" width="1.8" height="1" fill="#7fae6a"/><rect x="6.2" y="4.7" width="2.6" height="1.3" fill="#161616"/><rect x="0" y="7.4" width="4.2" height="3" fill="#161616"/><rect x="1.2" y="8.4" width="1.8" height="1" fill="#7fae6a"/><rect x="6.2" y="8.4" width="2.6" height="1.3" fill="#161616"/></svg>
<span class="t" style="left:20px;top:134px;line-height:22px;font-size:16px;letter-spacing:0.157px;">description  :St...</span>
<svg style="left:5px;top:161.4px" width="10" height="11" viewBox="0 0 10 11"><rect x="0" y="0.0" width="4.2" height="3" fill="#161616"/><rect x="1.2" y="1.0" width="1.8" height="1" fill="#7fae6a"/><rect x="6.2" y="1.0" width="2.6" height="1.3" fill="#161616"/><rect x="0" y="3.7" width="4.2" height="3" fill="#161616"/><rect x="1.2" y="4.7" width="1.8" height="1" fill="#7fae6a"/><rect x="6.2" y="4.7" width="2.6" height="1.3" fill="#161616"/><rect x="0" y="7.4" width="4.2" height="3" fill="#161616"/><rect x="1.2" y="8.4" width="1.8" height="1" fill="#7fae6a"/><rect x="6.2" y="8.4" width="2.6" height="1.3" fill="#161616"/></svg>
<span class="t" style="left:20px;top:156px;line-height:22px;font-size:16px;letter-spacing:0.252px;">tenantId  :String</span>
<svg style="left:5px;top:183.4px" width="10" height="11" viewBox="0 0 10 11"><rect x="0" y="0.0" width="4.2" height="3" fill="#161616"/><rect x="1.2" y="1.0" width="1.8" height="1" fill="#7fae6a"/><rect x="6.2" y="1.0" width="2.6" height="1.3" fill="#161616"/><rect x="0" y="3.7" width="4.2" height="3" fill="#161616"/><rect x="1.2" y="4.7" width="1.8" height="1" fill="#7fae6a"/><rect x="6.2" y="4.7" width="2.6" height="1.3" fill="#161616"/><rect x="0" y="7.4" width="4.2" height="3" fill="#161616"/><rect x="1.2" y="8.4" width="1.8" height="1" fill="#7fae6a"/><rect x="6.2" y="8.4" width="2.6" height="1.3" fill="#161616"/></svg>
<span class="t" style="left:20px;top:178px;line-height:22px;font-size:16px;letter-spacing:0.009px;">createTime  :Ti...</span>
<svg style="left:5px;top:205.4px" width="10" height="11" viewBox="0 0 10 11"><rect x="0" y="0.0" width="4.2" height="3" fill="#161616"/><rect x="1.2" y="1.0" width="1.8" height="1" fill="#7fae6a"/><rect x="6.2" y="1.0" width="2.6" height="1.3" fill="#161616"/><rect x="0" y="3.7" width="4.2" height="3" fill="#161616"/><rect x="1.2" y="4.7" width="1.8" height="1" fill="#7fae6a"/><rect x="6.2" y="4.7" width="2.6" height="1.3" fill="#161616"/><rect x="0" y="7.4" width="4.2" height="3" fill="#161616"/><rect x="1.2" y="8.4" width="1.8" height="1" fill="#7fae6a"/><rect x="6.2" y="8.4" width="2.6" height="1.3" fill="#161616"/></svg>
<span class="t" style="left:20px;top:200px;line-height:22px;font-size:16px;letter-spacing:0.151px;">updateTime  :T...</span>
<svg style="left:5px;top:227.4px" width="10" height="11" viewBox="0 0 10 11"><rect x="0" y="0.0" width="4.2" height="3" fill="#161616"/><rect x="1.2" y="1.0" width="1.8" height="1" fill="#7fae6a"/><rect x="6.2" y="1.0" width="2.6" height="1.3" fill="#161616"/><rect x="0" y="3.7" width="4.2" height="3" fill="#161616"/><rect x="1.2" y="4.7" width="1.8" height="1" fill="#7fae6a"/><rect x="6.2" y="4.7" width="2.6" height="1.3" fill="#161616"/><rect x="0" y="7.4" width="4.2" height="3" fill="#161616"/><rect x="1.2" y="8.4" width="1.8" height="1" fill="#7fae6a"/><rect x="6.2" y="8.4" width="2.6" height="1.3" fill="#161616"/></svg>
<span class="t" style="left:20px;top:222px;line-height:22px;font-size:16px;letter-spacing:-0.027px;">createUser  :Str...</span>
<svg style="left:5px;top:249.4px" width="10" height="11" viewBox="0 0 10 11"><rect x="0" y="0.0" width="4.2" height="3" fill="#161616"/><rect x="1.2" y="1.0" width="1.8" height="1" fill="#7fae6a"/><rect x="6.2" y="1.0" width="2.6" height="1.3" fill="#161616"/><rect x="0" y="3.7" width="4.2" height="3" fill="#161616"/><rect x="1.2" y="4.7" width="1.8" height="1" fill="#7fae6a"/><rect x="6.2" y="4.7" width="2.6" height="1.3" fill="#161616"/><rect x="0" y="7.4" width="4.2" height="3" fill="#161616"/><rect x="1.2" y="8.4" width="1.8" height="1" fill="#7fae6a"/><rect x="6.2" y="8.4" width="2.6" height="1.3" fill="#161616"/></svg>
<span class="t" style="left:20px;top:244px;line-height:22px;font-size:16px;letter-spacing:-0.030px;">updateUser  :St...</span>
<svg style="left:5px;top:271.4px" width="10" height="11" viewBox="0 0 10 11"><rect x="0" y="0.0" width="4.2" height="3" fill="#161616"/><rect x="1.2" y="1.0" width="1.8" height="1" fill="#7fae6a"/><rect x="6.2" y="1.0" width="2.6" height="1.3" fill="#161616"/><rect x="0" y="3.7" width="4.2" height="3" fill="#161616"/><rect x="1.2" y="4.7" width="1.8" height="1" fill="#7fae6a"/><rect x="6.2" y="4.7" width="2.6" height="1.3" fill="#161616"/><rect x="0" y="7.4" width="4.2" height="3" fill="#161616"/><rect x="1.2" y="8.4" width="1.8" height="1" fill="#7fae6a"/><rect x="6.2" y="8.4" width="2.6" height="1.3" fill="#161616"/></svg>
<span class="t" style="left:20px;top:266px;line-height:22px;font-size:16px;letter-spacing:0.013px;">isFixed  :String</span>
<svg style="left:5px;top:293.4px" width="10" height="11" viewBox="0 0 10 11"><rect x="0" y="0.0" width="4.2" height="3" fill="#161616"/><rect x="1.2" y="1.0" width="1.8" height="1" fill="#7fae6a"/><rect x="6.2" y="1.0" width="2.6" height="1.3" fill="#161616"/><rect x="0" y="3.7" width="4.2" height="3" fill="#161616"/><rect x="1.2" y="4.7" width="1.8" height="1" fill="#7fae6a"/><rect x="6.2" y="4.7" width="2.6" height="1.3" fill="#161616"/><rect x="0" y="7.4" width="4.2" height="3" fill="#161616"/><rect x="1.2" y="8.4" width="1.8" height="1" fill="#7fae6a"/><rect x="6.2" y="8.4" width="2.6" height="1.3" fill="#161616"/></svg>
<span class="t" style="left:20px;top:288px;line-height:22px;font-size:16px;letter-spacing:0.177px;">extra  :String</span>
<svg style="left:5px;top:315.4px" width="10" height="11" viewBox="0 0 10 11"><rect x="0" y="0.0" width="4.2" height="3" fill="#161616"/><rect x="1.2" y="1.0" width="1.8" height="1" fill="#7fae6a"/><rect x="6.2" y="1.0" width="2.6" height="1.3" fill="#161616"/><rect x="0" y="3.7" width="4.2" height="3" fill="#161616"/><rect x="1.2" y="4.7" width="1.8" height="1" fill="#7fae6a"/><rect x="6.2" y="4.7" width="2.6" height="1.3" fill="#161616"/><rect x="0" y="7.4" width="4.2" height="3" fill="#161616"/><rect x="1.2" y="8.4" width="1.8" height="1" fill="#7fae6a"/><rect x="6.2" y="8.4" width="2.6" height="1.3" fill="#161616"/></svg>
<span class="t" style="left:20px;top:310px;line-height:22px;font-size:16px;letter-spacing:-0.093px;">isShare  :String</span>
<svg style="left:5px;top:337.4px" width="10" height="11" viewBox="0 0 10 11"><rect x="0" y="0.0" width="4.2" height="3" fill="#161616"/><rect x="1.2" y="1.0" width="1.8" height="1" fill="#7fae6a"/><rect x="6.2" y="1.0" width="2.6" height="1.3" fill="#161616"/><rect x="0" y="3.7" width="4.2" height="3" fill="#161616"/><rect x="1.2" y="4.7" width="1.8" height="1" fill="#7fae6a"/><rect x="6.2" y="4.7" width="2.6" height="1.3" fill="#161616"/><rect x="0" y="7.4" width="4.2" height="3" fill="#161616"/><rect x="1.2" y="8.4" width="1.8" height="1" fill="#7fae6a"/><rect x="6.2" y="8.4" width="2.6" height="1.3" fill="#161616"/></svg>
<span class="t" style="left:20px;top:332px;line-height:22px;font-size:16px;letter-spacing:-0.039px;">accessToken  :Int</span>
<svg style="left:5px;top:359.4px" width="10" height="11" viewBox="0 0 10 11"><rect x="0" y="0.0" width="4.2" height="3" fill="#161616"/><rect x="1.2" y="1.0" width="1.8" height="1" fill="#7fae6a"/><rect x="6.2" y="1.0" width="2.6" height="1.3" fill="#161616"/><rect x="0" y="3.7" width="4.2" height="3" fill="#161616"/><rect x="1.2" y="4.7" width="1.8" height="1" fill="#7fae6a"/><rect x="6.2" y="4.7" width="2.6" height="1.3" fill="#161616"/><rect x="0" y="7.4" width="4.2" height="3" fill="#161616"/><rect x="1.2" y="8.4" width="1.8" height="1" fill="#7fae6a"/><rect x="6.2" y="8.4" width="2.6" height="1.3" fill="#161616"/></svg>
<span class="t" style="left:20px;top:354px;line-height:22px;font-size:16px;letter-spacing:0.022px;">refreshToken  :I...</span>
<svg style="left:5px;top:381.4px" width="10" height="11" viewBox="0 0 10 11"><rect x="0" y="0.0" width="4.2" height="3" fill="#161616"/><rect x="1.2" y="1.0" width="1.8" height="1" fill="#7fae6a"/><rect x="6.2" y="1.0" width="2.6" height="1.3" fill="#161616"/><rect x="0" y="3.7" width="4.2" height="3" fill="#161616"/><rect x="1.2" y="4.7" width="1.8" height="1" fill="#7fae6a"/><rect x="6.2" y="4.7" width="2.6" height="1.3" fill="#161616"/><rect x="0" y="7.4" width="4.2" height="3" fill="#161616"/><rect x="1.2" y="8.4" width="1.8" height="1" fill="#7fae6a"/><rect x="6.2" y="8.4" width="2.6" height="1.3" fill="#161616"/></svg>
<span class="t" style="left:20px;top:376px;line-height:22px;font-size:16px;letter-spacing:0.120px;">openType  :Stri...</span>
<svg style="left:5px;top:403.4px" width="10" height="11" viewBox="0 0 10 11"><rect x="0" y="0.0" width="4.2" height="3" fill="#161616"/><rect x="1.2" y="1.0" width="1.8" height="1" fill="#7fae6a"/><rect x="6.2" y="1.0" width="2.6" height="1.3" fill="#161616"/><rect x="0" y="3.7" width="4.2" height="3" fill="#161616"/><rect x="1.2" y="4.7" width="1.8" height="1" fill="#7fae6a"/><rect x="6.2" y="4.7" width="2.6" height="1.3" fill="#161616"/><rect x="0" y="7.4" width="4.2" height="3" fill="#161616"/><rect x="1.2" y="8.4" width="1.8" height="1" fill="#7fae6a"/><rect x="6.2" y="8.4" width="2.6" height="1.3" fill="#161616"/></svg>
<span class="t" style="left:20px;top:398px;line-height:22px;font-size:16px;letter-spacing:0.270px;">microUrl  :String</span>
<svg style="left:5px;top:425.4px" width="10" height="11" viewBox="0 0 10 11"><rect x="0" y="0.0" width="4.2" height="3" fill="#161616"/><rect x="1.2" y="1.0" width="1.8" height="1" fill="#7fae6a"/><rect x="6.2" y="1.0" width="2.6" height="1.3" fill="#161616"/><rect x="0" y="3.7" width="4.2" height="3" fill="#161616"/><rect x="1.2" y="4.7" width="1.8" height="1" fill="#7fae6a"/><rect x="6.2" y="4.7" width="2.6" height="1.3" fill="#161616"/><rect x="0" y="7.4" width="4.2" height="3" fill="#161616"/><rect x="1.2" y="8.4" width="1.8" height="1" fill="#7fae6a"/><rect x="6.2" y="8.4" width="2.6" height="1.3" fill="#161616"/></svg>
<span class="t" style="left:20px;top:420px;line-height:22px;font-size:16px;letter-spacing:0.182px;">microMark  :Str...</span>
<svg style="left:5px;top:447.4px" width="10" height="11" viewBox="0 0 10 11"><rect x="0" y="0.0" width="4.2" height="3" fill="#161616"/><rect x="1.2" y="1.0" width="1.8" height="1" fill="#7fae6a"/><rect x="6.2" y="1.0" width="2.6" height="1.3" fill="#161616"/><rect x="0" y="3.7" width="4.2" height="3" fill="#161616"/><rect x="1.2" y="4.7" width="1.8" height="1" fill="#7fae6a"/><rect x="6.2" y="4.7" width="2.6" height="1.3" fill="#161616"/><rect x="0" y="7.4" width="4.2" height="3" fill="#161616"/><rect x="1.2" y="8.4" width="1.8" height="1" fill="#7fae6a"/><rect x="6.2" y="8.4" width="2.6" height="1.3" fill="#161616"/></svg>
<span class="t" style="left:20px;top:442px;line-height:22px;font-size:16px;letter-spacing:0.068px;">isLowcode  :Str...</span>
<svg style="left:5px;top:469.4px" width="10" height="11" viewBox="0 0 10 11"><rect x="0" y="0.0" width="4.2" height="3" fill="#161616"/><rect x="1.2" y="1.0" width="1.8" height="1" fill="#7fae6a"/><rect x="6.2" y="1.0" width="2.6" height="1.3" fill="#161616"/><rect x="0" y="3.7" width="4.2" height="3" fill="#161616"/><rect x="1.2" y="4.7" width="1.8" height="1" fill="#7fae6a"/><rect x="6.2" y="4.7" width="2.6" height="1.3" fill="#161616"/><rect x="0" y="7.4" width="4.2" height="3" fill="#161616"/><rect x="1.2" y="8.4" width="1.8" height="1" fill="#7fae6a"/><rect x="6.2" y="8.4" width="2.6" height="1.3" fill="#161616"/></svg>
<span class="t" style="left:20px;top:464px;line-height:22px;font-size:16px;letter-spacing:-0.031px;">bpsTenantId  :S...</span>
<svg style="left:5px;top:491.4px" width="10" height="11" viewBox="0 0 10 11"><rect x="0" y="0.0" width="4.2" height="3" fill="#161616"/><rect x="1.2" y="1.0" width="1.8" height="1" fill="#7fae6a"/><rect x="6.2" y="1.0" width="2.6" height="1.3" fill="#161616"/><rect x="0" y="3.7" width="4.2" height="3" fill="#161616"/><rect x="1.2" y="4.7" width="1.8" height="1" fill="#7fae6a"/><rect x="6.2" y="4.7" width="2.6" height="1.3" fill="#161616"/><rect x="0" y="7.4" width="4.2" height="3" fill="#161616"/><rect x="1.2" y="8.4" width="1.8" height="1" fill="#7fae6a"/><rect x="6.2" y="8.4" width="2.6" height="1.3" fill="#161616"/></svg>
<span class="t" style="left:20px;top:486px;line-height:22px;font-size:16px;letter-spacing:0.170px;">dimensionCod...</span>
</div>
<div class="a" style="left:1138px;top:192px;width:150px;height:290px;border:1px solid #6aa32a;background:#fff;"></div>
<div class="a" style="left:1140px;top:221px;width:147px;height:1px;background:repeating-linear-gradient(90deg,#9c9c9c 0 1px,transparent 1px 3px);"></div>
<div class="a" style="left:1140px;top:465px;width:147px;height:1px;background:repeating-linear-gradient(90deg,#9c9c9c 0 1px,transparent 1px 3px);"></div>
<svg style="left:1149px;top:205px" width="14" height="13" viewBox="0 0 14 13"><rect x="0.5" y="1.5" width="9" height="7" fill="#fff" stroke="#5a9a38" stroke-width="1"/><rect x="0.5" y="1.5" width="9" height="2.5" fill="#8cc860"/><path d="M6.4 5.6 V10.8 Q6.4 12 9 12 Q11.6 12 11.6 10.8 V5.6 Z" fill="#f4c040" stroke="#c88818" stroke-width="0.9"/><ellipse cx="9" cy="5.6" rx="2.6" ry="1.2" fill="#fde4a0" stroke="#c88818" stroke-width="0.8"/></svg>
<span class="t" style="left:1169px;top:200.5px;line-height:22px;font-size:16px;letter-spacing:-0.013px;">BusinessObject</span>
<div class="a" style="left:1140px;top:222px;width:147px;height:243px;overflow:hidden;">
<svg style="left:2.5px;top:5px" width="15" height="13" viewBox="0 0 15 13"><path d="M0.6 3.2 Q3 1.4 7 3 V6 H5.4 V5 H3.8 V6 H0.6 Z" fill="#f4d040" stroke="#c09020" stroke-width="0.8"/><ellipse cx="10" cy="3.8" rx="4" ry="3.4" fill="#fade5c" stroke="#c09020" stroke-width="0.9"/><circle cx="10.6" cy="3.8" r="1" fill="#7a4a10"/><rect x="2" y="9" width="4.2" height="3.2" fill="#161616"/><rect x="3.1" y="10.1" width="2" height="1" fill="#7fae6a"/><rect x="7.6" y="9" width="4.2" height="3.2" fill="#161616"/><rect x="8.7" y="10.1" width="2" height="1" fill="#7fae6a"/></svg>
<span class="t" style="left:20px;top:2px;line-height:22px;font-size:16px;letter-spacing:0.241px;">id  :String</span>
<svg style="left:5px;top:29.4px" width="10" height="11" viewBox="0 0 10 11"><rect x="0" y="0.0" width="4.2" height="3" fill="#161616"/><rect x="1.2" y="1.0" width="1.8" height="1" fill="#7fae6a"/><rect x="6.2" y="1.0" width="2.6" height="1.3" fill="#161616"/><rect x="0" y="3.7" width="4.2" height="3" fill="#161616"/><rect x="1.2" y="4.7" width="1.8" height="1" fill="#7fae6a"/><rect x="6.2" y="4.7" width="2.6" height="1.3" fill="#161616"/><rect x="0" y="7.4" width="4.2" height="3" fill="#161616"/><rect x="1.2" y="8.4" width="1.8" height="1" fill="#7fae6a"/><rect x="6.2" y="8.4" width="2.6" height="1.3" fill="#161616"/></svg>
<span class="t" style="left:20px;top:24px;line-height:22px;font-size:16px;letter-spacing:0.070px;">name  :String</span>
<svg style="left:5px;top:51.4px" width="10" height="11" viewBox="0 0 10 11"><rect x="0" y="0.0" width="4.2" height="3" fill="#161616"/><rect x="1.2" y="1.0" width="1.8" height="1" fill="#7fae6a"/><rect x="6.2" y="1.0" width="2.6" height="1.3" fill="#161616"/><rect x="0" y="3.7" width="4.2" height="3" fill="#161616"/><rect x="1.2" y="4.7" width="1.8" height="1" fill="#7fae6a"/><rect x="6.2" y="4.7" width="2.6" height="1.3" fill="#161616"/><rect x="0" y="7.4" width="4.2" height="3" fill="#161616"/><rect x="1.2" y="8.4" width="1.8" height="1" fill="#7fae6a"/><rect x="6.2" y="8.4" width="2.6" height="1.3" fill="#161616"/></svg>
<span class="t" style="left:20px;top:46px;line-height:22px;font-size:16px;letter-spacing:0.264px;">code  :String</span>
<svg style="left:5px;top:73.4px" width="10" height="11" viewBox="0 0 10 11"><rect x="0" y="0.0" width="4.2" height="3" fill="#161616"/><rect x="1.2" y="1.0" width="1.8" height="1" fill="#7fae6a"/><rect x="6.2" y="1.0" width="2.6" height="1.3" fill="#161616"/><rect x="0" y="3.7" width="4.2" height="3" fill="#161616"/><rect x="1.2" y="4.7" width="1.8" height="1" fill="#7fae6a"/><rect x="6.2" y="4.7" width="2.6" height="1.3" fill="#161616"/><rect x="0" y="7.4" width="4.2" height="3" fill="#161616"/><rect x="1.2" y="8.4" width="1.8" height="1" fill="#7fae6a"/><rect x="6.2" y="8.4" width="2.6" height="1.3" fill="#161616"/></svg>
<span class="t" style="left:20px;top:68px;line-height:22px;font-size:16px;letter-spacing:0.218px;">appId  :String</span>
<svg style="left:5px;top:95.4px" width="10" height="11" viewBox="0 0 10 11"><rect x="0" y="0.0" width="4.2" height="3" fill="#161616"/><rect x="1.2" y="1.0" width="1.8" height="1" fill="#7fae6a"/><rect x="6.2" y="1.0" width="2.6" height="1.3" fill="#161616"/><rect x="0" y="3.7" width="4.2" height="3" fill="#161616"/><rect x="1.2" y="4.7" width="1.8" height="1" fill="#7fae6a"/><rect x="6.2" y="4.7" width="2.6" height="1.3" fill="#161616"/><rect x="0" y="7.4" width="4.2" height="3" fill="#161616"/><rect x="1.2" y="8.4" width="1.8" height="1" fill="#7fae6a"/><rect x="6.2" y="8.4" width="2.6" height="1.3" fill="#161616"/></svg>
<span class="t" style="left:20px;top:90px;line-height:22px;font-size:16px;letter-spacing:0.202px;">types  :String</span>
<svg style="left:5px;top:117.4px" width="10" height="11" viewBox="0 0 10 11"><rect x="0" y="0.0" width="4.2" height="3" fill="#161616"/><rect x="1.2" y="1.0" width="1.8" height="1" fill="#7fae6a"/><rect x="6.2" y="1.0" width="2.6" height="1.3" fill="#161616"/><rect x="0" y="3.7" width="4.2" height="3" fill="#161616"/><rect x="1.2" y="4.7" width="1.8" height="1" fill="#7fae6a"/><rect x="6.2" y="4.7" width="2.6" height="1.3" fill="#161616"/><rect x="0" y="7.4" width="4.2" height="3" fill="#161616"/><rect x="1.2" y="8.4" width="1.8" height="1" fill="#7fae6a"/><rect x="6.2" y="8.4" width="2.6" height="1.3" fill="#161616"/></svg>
<span class="t" style="left:20px;top:112px;line-height:22px;font-size:16px;letter-spacing:0.157px;">description  :St...</span>
<svg style="left:5px;top:139.4px" width="10" height="11" viewBox="0 0 10 11"><rect x="0" y="0.0" width="4.2" height="3" fill="#161616"/><rect x="1.2" y="1.0" width="1.8" height="1" fill="#7fae6a"/><rect x="6.2" y="1.0" width="2.6" height="1.3" fill="#161616"/><rect x="0" y="3.7" width="4.2" height="3" fill="#161616"/><rect x="1.2" y="4.7" width="1.8" height="1" fill="#7fae6a"/><rect x="6.2" y="4.7" width="2.6" height="1.3" fill="#161616"/><rect x="0" y="7.4" width="4.2" height="3" fill="#161616"/><rect x="1.2" y="8.4" width="1.8" height="1" fill="#7fae6a"/><rect x="6.2" y="8.4" width="2.6" height="1.3" fill="#161616"/></svg>
<span class="t" style="left:20px;top:134px;line-height:22px;font-size:16px;letter-spacing:0.252px;">tenantId  :String</span>
<svg style="left:5px;top:161.4px" width="10" height="11" viewBox="0 0 10 11"><rect x="0" y="0.0" width="4.2" height="3" fill="#161616"/><rect x="1.2" y="1.0" width="1.8" height="1" fill="#7fae6a"/><rect x="6.2" y="1.0" width="2.6" height="1.3" fill="#161616"/><rect x="0" y="3.7" width="4.2" height="3" fill="#161616"/><rect x="1.2" y="4.7" width="1.8" height="1" fill="#7fae6a"/><rect x="6.2" y="4.7" width="2.6" height="1.3" fill="#161616"/><rect x="0" y="7.4" width="4.2" height="3" fill="#161616"/><rect x="1.2" y="8.4" width="1.8" height="1" fill="#7fae6a"/><rect x="6.2" y="8.4" width="2.6" height="1.3" fill="#161616"/></svg>
<span class="t" style="left:20px;top:156px;line-height:22px;font-size:16px;letter-spacing:0.009px;">createTime  :Ti...</span>
<svg style="left:5px;top:183.4px" width="10" height="11" viewBox="0 0 10 11"><rect x="0" y="0.0" width="4.2" height="3" fill="#161616"/><rect x="1.2" y="1.0" width="1.8" height="1" fill="#7fae6a"/><rect x="6.2" y="1.0" width="2.6" height="1.3" fill="#161616"/><rect x="0" y="3.7" width="4.2" height="3" fill="#161616"/><rect x="1.2" y="4.7" width="1.8" height="1" fill="#7fae6a"/><rect x="6.2" y="4.7" width="2.6" height="1.3" fill="#161616"/><rect x="0" y="7.4" width="4.2" height="3" fill="#161616"/><rect x="1.2" y="8.4" width="1.8" height="1" fill="#7fae6a"/><rect x="6.2" y="8.4" width="2.6" height="1.3" fill="#161616"/></svg>
<span class="t" style="left:20px;top:178px;line-height:22px;font-size:16px;letter-spacing:0.151px;">updateTime  :T...</span>
<svg style="left:5px;top:205.4px" width="10" height="11" viewBox="0 0 10 11"><rect x="0" y="0.0" width="4.2" height="3" fill="#161616"/><rect x="1.2" y="1.0" width="1.8" height="1" fill="#7fae6a"/><rect x="6.2" y="1.0" width="2.6" height="1.3" fill="#161616"/><rect x="0" y="3.7" width="4.2" height="3" fill="#161616"/><rect x="1.2" y="4.7" width="1.8" height="1" fill="#7fae6a"/><rect x="6.2" y="4.7" width="2.6" height="1.3" fill="#161616"/><rect x="0" y="7.4" width="4.2" height="3" fill="#161616"/><rect x="1.2" y="8.4" width="1.8" height="1" fill="#7fae6a"/><rect x="6.2" y="8.4" width="2.6" height="1.3" fill="#161616"/></svg>
<span class="t" style="left:20px;top:200px;line-height:22px;font-size:16px;letter-spacing:-0.027px;">createUser  :Str...</span>
<svg style="left:5px;top:227.4px" width="10" height="11" viewBox="0 0 10 11"><rect x="0" y="0.0" width="4.2" height="3" fill="#161616"/><rect x="1.2" y="1.0" width="1.8" height="1" fill="#7fae6a"/><rect x="6.2" y="1.0" width="2.6" height="1.3" fill="#161616"/><rect x="0" y="3.7" width="4.2" height="3" fill="#161616"/><rect x="1.2" y="4.7" width="1.8" height="1" fill="#7fae6a"/><rect x="6.2" y="4.7" width="2.6" height="1.3" fill="#161616"/><rect x="0" y="7.4" width="4.2" height="3" fill="#161616"/><rect x="1.2" y="8.4" width="1.8" height="1" fill="#7fae6a"/><rect x="6.2" y="8.4" width="2.6" height="1.3" fill="#161616"/></svg>
<span class="t" style="left:20px;top:222px;line-height:22px;font-size:16px;letter-spacing:-0.030px;">updateUser  :St...</span>
</div>
<div class="a" style="left:866px;top:190px;width:4.3px;height:4.3px;background:#000;"></div>
<div class="a" style="left:941px;top:190px;width:4.3px;height:4.3px;background:#000;"></div>
<div class="a" style="left:1016px;top:190px;width:4.3px;height:4.3px;background:#000;"></div>
<div class="a" style="left:866px;top:463px;width:4.3px;height:4.3px;background:#000;"></div>
<div class="a" style="left:1016px;top:463px;width:4.3px;height:4.3px;background:#000;"></div>
<div class="a" style="left:866px;top:736px;width:4.3px;height:4.3px;background:#000;"></div>
<div class="a" style="left:941px;top:736px;width:4.3px;height:4.3px;background:#000;"></div>
<div class="a" style="left:1016px;top:736px;width:4.3px;height:4.3px;background:#000;"></div>
<div class="a" style="left:1617px;top:65px;width:264px;height:750px;background:#fff;border-radius:6px 6px 0 0;"></div>
<div class="a" style="left:1618px;top:66px;width:262px;height:29px;background:#f5f6fc;border-radius:5px 5px 0 0;"></div>
<div class="a" style="left:1617px;top:65px;width:81px;height:30px;background:linear-gradient(#d9e1ec,#fff 92%);border-radius:6px 9px 0 0;"></div>
<span class="t" style="left:1641px;top:71px;line-height:22px;font-size:15px;letter-spacing:0.495px;">构...</span>
<span class="t" style="left:1722px;top:71px;line-height:22px;font-size:15px;letter-spacing:-0.172px;color:#a0a0a8;">业...</span>
<span class="t" style="left:1782px;top:71px;line-height:22px;font-size:15px;letter-spacing:-0.172px;color:#a0a0a8;">组...</span>
<div class="a" style="left:1625px;top:124px;width:201px;height:26px;background:#fff;border:1px solid #7a7a7a;"></div>
<div class="a" style="left:1832px;top:125px;width:40px;height:28px;background:#e1e1e1;border:1px solid #adadad;"></div>
<span class="t" style="left:1837px;top:129px;line-height:22px;font-size:15px;letter-spacing:0.984px;">搜索</span>
<div class="a" style="left:1625px;top:159px;width:248px;height:700px;background:#fff;border:1px solid #a0a0a8;"></div>
<svg style="left:1635.8px;top:167.2px" width="6" height="10" viewBox="0 0 6 10"><path d="M0.6 0.6 L4.6 4.8 L0.6 9" fill="none" stroke="#a6a6a6" stroke-width="1.4"/></svg>
<div class="a" style="left:1660px;top:160px;width:210px;height:24px;overflow:hidden;">
<span class="t" style="left:11px;top:1px;line-height:23px;font-size:16px;letter-spacing:0.371px;">com.primeton.eos.foundation</span>
</div>
<svg style="left:1px;top:73px" width="17" height="16" viewBox="0 0 17 16"><circle cx="7.4" cy="8" r="7" fill="#7aa8dc"/><path d="M2 5 Q5 8 3 13" stroke="#d8e8f8" stroke-width="1" fill="none"/><circle cx="9" cy="5" r="4.4" fill="#f5b830"/><circle cx="8.4" cy="3.6" r="1.6" fill="#fde8a0"/><rect x="7.6" y="8" width="3" height="3" fill="#223"/><rect x="7.6" y="13" width="3" height="3" fill="#223"/><path d="M9 10 V13.6" stroke="#223" stroke-width="1"/><path d="M12 9 H16 M12 12 H16 M12 15 H16" stroke="#223" stroke-width="1.2"/><rect x="8.4" y="13.6" width="1.4" height="1.4" fill="#4c4"/></svg>
<svg style="left:103px;top:75.5px" width="11" height="11" viewBox="0 0 11 11"><path d="M0.5 0.5 H3 L5 2.6 L7 0.5 H9.5 V3 L7.4 5 L9.5 7 V9.5 H7 L5 7.4 L3 9.5 H0.5 V7 L2.6 5 L0.5 3 Z" fill="#fff" stroke="#626262" stroke-width="1" stroke-linejoin="round"/></svg>
<svg style="left:125px;top:73px" width="16" height="17" viewBox="0 0 16 17"><rect x="4.6" y="0.6" width="10" height="12" fill="#fcfcfc" stroke="#e8d4a0" stroke-width="1"/><path d="M6.4 3.4 H13 M6.4 6.4 H13 M8.6 9.4 H13" stroke="#c8d0e0" stroke-width="1"/><path d="M4 7.6 V15.6 M0.2 11.6 H7.8 M1.2 8.8 L6.8 14.4 M6.8 8.8 L1.2 14.4" stroke="#a8bcd4" stroke-width="0.9"/></svg>
<svg style="left:402px;top:72px" width="13" height="13" viewBox="0 0 13 13"><rect x="0.5" y="0.5" width="9" height="9" fill="#e8eef8" stroke="#9fb0cc" stroke-width="1"/><rect x="2.8" y="2.8" width="9.4" height="9.4" fill="#fbfdff" stroke="#8ea4c8" stroke-width="1"/><path d="M4.8 7.6 H10.4" stroke="#1f4f9c" stroke-width="1.4"/></svg>
<div class="a" style="left:420px;top:67px;width:23px;height:21px;background:#cce4fb;border:1px solid #99ccf3;"></div>
<svg style="left:424px;top:70px" width="16" height="16" viewBox="0 0 16 16"><path d="M0.7 4.6 L5.4 0.7 V3.4 H12 V5.8 H5.4 V8.5 Z" fill="#fdf3cc" stroke="#d39a28" stroke-width="1.1" stroke-linejoin="round"/><path d="M15.3 11.4 L10.6 7.5 V10.2 H4 V12.6 H10.6 V15.3 Z" fill="#fdf3cc" stroke="#d39a28" stroke-width="1.1" stroke-linejoin="round"/></svg>
<div class="a" style="left:445px;top:69px;width:1px;height:18px;background:#8c8c8c;"></div>
<svg style="left:454.5px;top:70.5px" width="15" height="15" viewBox="0 0 15 15"><path d="M0.6 6.4 Q1.6 2 6 2.4 V0.4 L10 3.8 L6 7 V5 Q3.4 4.6 2.4 8 Z" fill="#fbe08a" stroke="#d39a28" stroke-width="0.9" stroke-linejoin="round"/><path d="M14.6 8.6 Q13.6 13 9.2 12.6 V14.6 L5.2 11.2 L9.2 8 V10 Q11.8 10.4 12.8 7 Z" fill="#fbe08a" stroke="#d39a28" stroke-width="0.9" stroke-linejoin="round"/></svg>
<svg style="left:486px;top:73px" width="10" height="6" viewBox="0 0 10 6"><path d="M0.6 0.5 H9.4 L5 4.9 Z" fill="#fff" stroke="#505050" stroke-width="0.9" stroke-linejoin="round"/></svg>
<svg style="left:506px;top:73px" width="10" height="4" viewBox="0 0 10 4"><rect x="0.5" y="0.5" width="9" height="2.8" fill="#fff" stroke="#626262" stroke-width="1"/></svg>
<svg style="left:529px;top:73px" width="10" height="10" viewBox="0 0 10 10"><rect x="0.5" y="0.5" width="8.6" height="9" fill="#fff" stroke="#626262" stroke-width="1"/><path d="M0.5 1.2 H9.1" stroke="#626262" stroke-width="1.4"/></svg>
<svg style="left:563px;top:74px" width="15" height="14" viewBox="0 0 15 14"><rect x="0.6" y="0.8" width="12.4" height="9.6" fill="#f6f8ec" stroke="#a8b0bc" stroke-width="1"/><rect x="0.2" y="0.2" width="13.2" height="2.6" fill="#4a8cdc"/><rect x="1.4" y="3.6" width="10.8" height="6" fill="#e4ecc8"/><path d="M7.6 6.4 V12 Q7.6 13.4 10.8 13.4 Q14 13.4 14 12 V6.4 Z" fill="#f2b632" stroke="#c88a1c" stroke-width="0.9"/><ellipse cx="10.8" cy="6.4" rx="3.2" ry="1.4" fill="#fbe08a" stroke="#c88a1c" stroke-width="0.8"/></svg>
<svg style="left:691px;top:75.8px" width="11" height="11" viewBox="0 0 11 11"><path d="M0.5 0.5 H3 L5 2.6 L7 0.5 H9.5 V3 L7.4 5 L9.5 7 V9.5 H7 L5 7.4 L3 9.5 H0.5 V7 L2.6 5 L0.5 3 Z" fill="#fff" stroke="#626262" stroke-width="1" stroke-linejoin="round"/></svg>
<svg style="left:1564px;top:73px" width="10" height="4" viewBox="0 0 10 4"><rect x="0.5" y="0.5" width="9" height="2.8" fill="#fff" stroke="#626262" stroke-width="1"/></svg>
<svg style="left:1588px;top:73px" width="10" height="10" viewBox="0 0 10 10"><rect x="0.5" y="0.5" width="8.6" height="9" fill="#fff" stroke="#626262" stroke-width="1"/><path d="M0.5 1.2 H9.1" stroke="#626262" stroke-width="1.4"/></svg>
<svg style="left:1622.5px;top:73.5px" width="16" height="15" viewBox="0 0 16 15"><path d="M3.6 9 Q3.6 2.6 8 2.6 Q12.4 2.6 12.4 9" fill="none" stroke="#8a98a8" stroke-width="1.1"/><rect x="3.4" y="0.6" width="9.2" height="2.6" rx="1" fill="#fbe9a8" stroke="#d3a030" stroke-width="0.9"/><rect x="0.4" y="8.8" width="8" height="3" fill="#3c9a5c"/><rect x="0.4" y="11.6" width="8" height="2.8" fill="#d85030"/><path d="M8.4 6.6 H12.6 L15.2 9 V14.4 H8.4 Z" fill="#f8fafc" stroke="#7a8cb0" stroke-width="0.9"/><path d="M10 10 H13.4 M10 12 H13.4" stroke="#4070c0" stroke-width="0.9"/></svg>
<svg style="left:1679.7px;top:75.5px" width="11" height="11" viewBox="0 0 11 11"><path d="M0.5 0.5 H3 L5 2.6 L7 0.5 H9.5 V3 L7.4 5 L9.5 7 V9.5 H7 L5 7.4 L3 9.5 H0.5 V7 L2.6 5 L0.5 3 Z" fill="#fff" stroke="#626262" stroke-width="1" stroke-linejoin="round"/></svg>
<svg style="left:1701.5px;top:73px" width="17" height="16" viewBox="0 0 17 16"><circle cx="3" cy="3" r="2.6" fill="#a8d4a8" stroke="#88c088" stroke-width="0.6"/><path d="M4.6 4.6 L8.6 7.6 M3.6 5.4 L6.6 12" stroke="#d8dce4" stroke-width="0.9"/><rect x="6.6" y="6.6" width="9.4" height="6.8" rx="0.8" fill="#e8eef8" stroke="#c0c8d8" stroke-width="1"/><rect x="8.4" y="8.4" width="5.8" height="3.2" fill="#a8c4e8"/><path d="M9 15.4 H13.6 M11.3 13.4 V15.4" stroke="#c0c8d8" stroke-width="1.1"/></svg>
<svg style="left:1761.5px;top:73px" width="16" height="16" viewBox="0 0 16 16"><circle cx="7" cy="8" r="7" fill="#cfe3c4"/><path d="M2 5 Q5 8 3 13 M6 1.4 Q4 6 6 14" stroke="#eef6e8" stroke-width="1" fill="none"/><path d="M8 1 Q13.6 2.6 13.8 8" stroke="#f3c48a" stroke-width="2" fill="none"/><circle cx="10" cy="7.6" r="2.4" fill="#b4b4b4"/><path d="M5.6 15.6 Q5.8 10.8 10 10.8 Q14.2 10.8 14.4 15.6 Z" fill="#a8a8a8"/></svg>
<svg style="left:1833px;top:73px" width="10" height="4" viewBox="0 0 10 4"><rect x="0.5" y="0.5" width="9" height="2.8" fill="#fff" stroke="#626262" stroke-width="1"/></svg>
<svg style="left:1856px;top:73px" width="10" height="10" viewBox="0 0 10 10"><rect x="0.5" y="0.5" width="8.6" height="9" fill="#fff" stroke="#626262" stroke-width="1"/><path d="M0.5 1.2 H9.1" stroke="#626262" stroke-width="1.4"/></svg>
<svg style="left:1773px;top:100.5px" width="17" height="16" viewBox="0 0 17 16"><path d="M4 3.6 Q4 2.4 5.2 2.4 H8.4 L9.8 4 H14.8 Q15.8 4 15.8 5 V13.4 H4 Z" fill="#f8dc98" stroke="#d39a38" stroke-width="1"/><rect x="1.6" y="7" width="5.4" height="8" fill="#5a9ce0" stroke="#2a62b0" stroke-width="0.9"/><path d="M0 8.6 H1.6 M0 11 H1.6 M0 13.4 H1.6 M7 8.6 H8.6 M7 11 H8.6 M7 13.4 H8.6" stroke="#2a62b0" stroke-width="0.9"/></svg>
<div class="a" style="left:1793px;top:97px;width:23px;height:21px;background:#cce4fb;border:1px solid #99ccf3;"></div>
<svg style="left:1798px;top:101px" width="16" height="15" viewBox="0 0 16 15"><path d="M0.6 2.6 Q0.6 1 2.2 1 H5.4 L7 2.8 H11.6 Q12.8 2.8 12.8 4 V11.4 H0.6 Z" fill="#f8dc98" stroke="#d39a38" stroke-width="1"/><circle cx="11.2" cy="10.4" r="4.2" fill="#6aa8e8"/><path d="M8.6 7.6 Q12 7 14.6 9 Q13 12 10 12.6" fill="#f5b437"/><circle cx="9.8" cy="11.6" r="1.4" fill="#cfe4f8"/></svg>
<div class="a" style="left:1818px;top:99px;width:1px;height:18px;background:#8c8c8c;"></div>
<svg style="left:1829px;top:101.5px" width="13" height="13" viewBox="0 0 13 13"><rect x="0.5" y="0.5" width="9" height="9" fill="#e8eef8" stroke="#9fb0cc" stroke-width="1"/><rect x="2.8" y="2.8" width="9.4" height="9.4" fill="#fbfdff" stroke="#8ea4c8" stroke-width="1"/><path d="M4.8 7.6 H10.4" stroke="#1f4f9c" stroke-width="1.4"/></svg>
<svg style="left:1859px;top:103px" width="10" height="6" viewBox="0 0 10 6"><path d="M0.6 0.5 H9.4 L5 4.9 Z" fill="#fff" stroke="#505050" stroke-width="0.9" stroke-linejoin="round"/></svg>
<svg style="left:1887px;top:40px" width="16" height="15" viewBox="0 0 16 15"><path d="M0.6 2.6 Q0.6 1 2.2 1 H5.4 L7 2.8 H11.6 Q12.8 2.8 12.8 4 V11.4 H0.6 Z" fill="#f8dc98" stroke="#d39a38" stroke-width="1"/><circle cx="11.2" cy="10.4" r="4.2" fill="#6aa8e8"/><path d="M8.6 7.6 Q12 7 14.6 9 Q13 12 10 12.6" fill="#f5b437"/><circle cx="9.8" cy="11.6" r="1.4" fill="#cfe4f8"/></svg>
<div class="a" style="left:1882px;top:65px;width:40px;height:125px;background:#e6eaf7;border:1px solid #b4bcd2;border-radius:6px 0 0 6px;"></div>
<svg style="left:1889px;top:71px" width="18" height="2" viewBox="0 0 18 2"><path d="M0.6 1 H18" stroke="#8a8a8a" stroke-width="1.4" stroke-dasharray="2.6 2.2"/></svg>
<svg style="left:1894px;top:82px" width="8" height="8" viewBox="0 0 8 8"><rect x="2.4" y="0.6" width="5" height="4" fill="#e6eaf7" stroke="#404040" stroke-width="1.1"/><rect x="0.6" y="3.4" width="5" height="4" fill="#e6eaf7" stroke="#404040" stroke-width="1.1"/></svg>
<svg style="left:1891.7px;top:101px" width="14" height="14" viewBox="0 0 14 14"><rect x="0.8" y="0.8" width="12" height="9.2" rx="1.6" fill="#f4f7fc" stroke="#2f5fb4" stroke-width="1.8"/><path d="M3.4 4.2 H7.6 M3.4 6.4 H9.6" stroke="#2a3a8c" stroke-width="1"/><path d="M5.8 10.6 H8 V11.8 H5.8Z" fill="#2f5fb4"/><path d="M1.8 12.3 H12" stroke="#2f5fb4" stroke-width="1.3"/></svg>
<svg style="left:1891px;top:123px" width="14" height="13" viewBox="0 0 14 13"><rect x="0.6" y="0.6" width="12.8" height="11.8" fill="#f2f2f2" stroke="#6a7aa0" stroke-width="1"/><rect x="0.6" y="0.6" width="12.8" height="2.6" fill="#d8dce8" stroke="#6a7aa0" stroke-width="1"/><path d="M0.6 6.2 H13.4 M0.6 9.2 H13.4 M4.6 3.2 V12.4" stroke="#b8bcc8" stroke-width="0.8"/></svg>
<svg style="left:1890px;top:144.5px" width="15" height="15" viewBox="0 0 15 15"><path d="M0.6 0.6 H11 Q14.6 2.6 12.6 7 Q11.4 10.6 13.6 14 H0.6 Z" fill="#f2f4f8" stroke="#6a7aa0" stroke-width="1"/><path d="M0.6 7.4 H12.4 M10.2 0.6 V14" stroke="#9ab0d8" stroke-width="1"/><circle cx="5.2" cy="4" r="2.4" fill="#e02828"/><path d="M2.6 13 V10.6 L5.2 8.4 L7.8 10.6 V13 Z" fill="#f5a020"/></svg>
<svg style="left:1891.7px;top:170px" width="15" height="12" viewBox="0 0 15 12"><rect x="0.4" y="0.8" width="13" height="6.6" fill="#58a868" stroke="#9a9a8a" stroke-width="0.8"/><path d="M0.4 3.4 H8" stroke="#d8ecd8" stroke-width="1"/><circle cx="10.6" cy="8.2" r="3.6" fill="#2f9a38" stroke="#fff" stroke-width="0.8"/><path d="M9.4 6.2 L12.6 8.2 L9.4 10.2 Z" fill="#fff"/></svg>
<svg style="left:1px;top:788.5px" width="17" height="16" viewBox="0 0 17 16"><path d="M0.6 3 L5.4 1 L10.4 3 L15.4 1 V15 L10.4 17 L5.4 15 L0.6 17 Z" fill="#9ccc50" stroke="#5a8a2a" stroke-width="0.8"/><path d="M5.4 1 L10.4 3 V17 L5.4 15 Z" fill="#c8dc58"/><path d="M1 8 Q4 6 6 9 T10 9" stroke="#3a9a9a" stroke-width="1.6" fill="none"/><path d="M5.4 1 V15 M10.4 3 V17" stroke="#e8f4c0" stroke-width="0.8"/><rect x="10.6" y="8.6" width="5.8" height="8" fill="#f4f0e0" stroke="#4a4a3a" stroke-width="0.8"/><path d="M11.6 11 H15.4 M11.6 13.4 H15.4" stroke="#4a4a3a" stroke-width="0.7"/><rect x="14" y="9.6" width="1.4" height="1" fill="#d03030"/></svg>
<svg style="left:148px;top:792px" width="11" height="11" viewBox="0 0 11 11"><path d="M0.5 0.5 H3 L5 2.6 L7 0.5 H9.5 V3 L7.4 5 L9.5 7 V9.5 H7 L5 7.4 L3 9.5 H0.5 V7 L2.6 5 L0.5 3 Z" fill="#fff" stroke="#626262" stroke-width="1" stroke-linejoin="round"/></svg>
<svg style="left:171px;top:790px" width="14" height="14" viewBox="0 0 14 14"><rect x="0.6" y="0.6" width="4.6" height="4.6" fill="#fff" stroke="#6a9cd8" stroke-width="1.1"/><rect x="0.6" y="8.6" width="4.6" height="4.6" fill="#fff" stroke="#6a9cd8" stroke-width="1.1"/><path d="M7.4 3 H13.4 M7.4 11 H11" stroke="#9abce8" stroke-width="1.2"/><rect x="6.8" y="6" width="3" height="2.2" fill="#9abce8"/></svg>
<svg style="left:286px;top:788px" width="13" height="13" viewBox="0 0 13 13"><rect x="0.5" y="0.5" width="9" height="9" fill="#e8eef8" stroke="#9fb0cc" stroke-width="1"/><rect x="2.8" y="2.8" width="9.4" height="9.4" fill="#fbfdff" stroke="#8ea4c8" stroke-width="1"/><path d="M4.8 7.6 H10.4" stroke="#1f4f9c" stroke-width="1.4"/></svg>
<svg style="left:307px;top:786px" width="16" height="16" viewBox="0 0 16 16"><path d="M0.7 4.6 L5.4 0.7 V3.4 H12 V5.8 H5.4 V8.5 Z" fill="#fdf3cc" stroke="#d39a28" stroke-width="1.1" stroke-linejoin="round"/><path d="M15.3 11.4 L10.6 7.5 V10.2 H4 V12.6 H10.6 V15.3 Z" fill="#fdf3cc" stroke="#d39a28" stroke-width="1.1" stroke-linejoin="round"/></svg>
<div class="a" style="left:329px;top:785px;width:1px;height:20px;background:#8c8c8c;"></div>
<div class="a" style="left:335px;top:783px;width:23px;height:21px;background:#cce4fb;border:1px solid #99ccf3;"></div>
<svg style="left:342.5px;top:788px" width="11" height="14" viewBox="0 0 11 14"><path d="M1.6 0.6 V11.6 H6 M1.6 6 H6 M1.6 1.6 H6" fill="none" stroke="#4a78c0" stroke-width="1.1"/><rect x="5.8" y="0.4" width="4" height="2.6" fill="#dbe8fa" stroke="#4a78c0" stroke-width="0.9"/><rect x="5.8" y="4.8" width="4" height="2.6" fill="#dbe8fa" stroke="#4a78c0" stroke-width="0.9"/><rect x="5.8" y="10.2" width="4" height="2.6" fill="#dbe8fa" stroke="#4a78c0" stroke-width="0.9"/></svg>
<div class="a" style="left:360px;top:785px;width:1px;height:20px;background:#8c8c8c;"></div>
<svg style="left:368.5px;top:786px" width="17" height="13" viewBox="0 0 17 13"><path d="M0.8 6.4 H5 Q6 4 8.6 4.4 Q10 2.6 12.6 3.6 Q16 4.6 15.6 8 Q15 11.6 11 11.4 Q8 12.6 6.4 9.4 H0.8 Z" fill="#f5b822" stroke="#a8700c" stroke-width="1"/><path d="M8.6 6 Q11 5 12 7 Q12.4 9 10.4 9.2" fill="none" stroke="#7a4a08" stroke-width="1.2"/><path d="M12.4 0.2 V4.6 M10.2 2.4 H14.6" stroke="#fff4b8" stroke-width="1.4"/></svg>
<div class="a" style="left:391px;top:785px;width:1px;height:20px;background:#8c8c8c;"></div>
<svg style="left:400px;top:786px" width="16" height="18" viewBox="0 0 16 18"><path d="M1 8.4 V16 H15 V8.4 H11.6 V12.4 H4.4 V8.4 Z" fill="#a8c4ec" stroke="#3a68b8" stroke-width="1.1"/><path d="M2.6 0.6 L9 8.4 M9 8.4 V4.6 M9 8.4 H5.2" stroke="#1c3f94" stroke-width="1.3" fill="none"/></svg>
<svg style="left:423px;top:786px" width="16" height="18" viewBox="0 0 16 18"><path d="M1 8.4 V16 H15 V8.4 H11.6 V12.4 H4.4 V8.4 Z" fill="#a8c4ec" stroke="#3a68b8" stroke-width="1.1"/><path d="M6 9.4 L12.6 1 M12.6 1 V5 M12.6 1 H8.8" stroke="#1c3f94" stroke-width="1.3" fill="none"/></svg>
<div class="a" style="left:445px;top:785px;width:1px;height:20px;background:#8c8c8c;"></div>
<svg style="left:456px;top:787px" width="14" height="17" viewBox="0 0 14 17"><path d="M0.8 1.6 Q0.8 0.6 1.8 0.6 H11.6 V14 H0.8 Z" fill="#8db8ea" stroke="#4a78c0" stroke-width="1"/><rect x="3.4" y="2.6" width="6.6" height="4.6" fill="#dbe8fa"/><rect x="4.6" y="9" width="9" height="6" fill="#fcfcf4" stroke="#b8903c" stroke-width="0.9"/><path d="M6.2 11 H12 M6.2 13 H12" stroke="#8a9ab8" stroke-width="0.8"/></svg>
<svg style="left:486px;top:789.5px" width="10" height="6" viewBox="0 0 10 6"><path d="M0.6 0.5 H9.4 L5 4.9 Z" fill="#fff" stroke="#505050" stroke-width="0.9" stroke-linejoin="round"/></svg>
<svg style="left:506px;top:789.5px" width="10" height="4" viewBox="0 0 10 4"><rect x="0.5" y="0.5" width="9" height="2.8" fill="#fff" stroke="#626262" stroke-width="1"/></svg>
<svg style="left:529px;top:789.5px" width="10" height="10" viewBox="0 0 10 10"><rect x="0.5" y="0.5" width="8.6" height="9" fill="#fff" stroke="#626262" stroke-width="1"/><path d="M0.5 1.2 H9.1" stroke="#626262" stroke-width="1.4"/></svg>
<svg style="left:593px;top:126px" width="14" height="14" viewBox="0 0 14 14"><ellipse cx="7" cy="6.6" rx="6.4" ry="6.2" fill="#eef2fa" stroke="#a8b4cc" stroke-width="0.9"/><path d="M4 12 Q7 14.6 10 12" fill="#cfd8ea" stroke="#a8b4cc" stroke-width="0.8"/><circle cx="4.4" cy="3.8" r="1.3" fill="#f5b020"/><circle cx="8.2" cy="3" r="1.3" fill="#8cc820"/><circle cx="10.4" cy="6.4" r="1.3" fill="#28a028"/><circle cx="3.6" cy="7.4" r="1.3" fill="#f07820"/><circle cx="5.2" cy="10.4" r="1.3" fill="#e02828"/><circle cx="8.6" cy="10.2" r="1.3" fill="#2860e0"/></svg>
<svg style="left:581px;top:152.5px" width="10" height="16" viewBox="0 0 10 16"><path d="M0.8 0.8 V12 L3.6 9.4 L5.6 14.4 L7.4 13.6 L5.4 8.8 H9 Z" fill="#fff" stroke="#5a4a30" stroke-width="0.9" stroke-linejoin="round"/></svg>
<svg style="left:577px;top:185.5px" width="16" height="9" viewBox="0 0 16 9"><path d="M0 4.5 H14" stroke="#1e78f0" stroke-width="1.3"/><path d="M11 0.6 L16 4.5 L11 8.4 Z" fill="#1e78f0"/></svg>
<svg style="left:577px;top:212.0px" width="16" height="9" viewBox="0 0 16 9"><path d="M0 4.5 H14" stroke="#d828c8" stroke-width="1.3"/><path d="M11 0.6 L16 4.5 L11 8.4 Z" fill="#d828c8"/></svg>
<svg style="left:577px;top:239.0px" width="16" height="9" viewBox="0 0 16 9"><path d="M0 4.5 H14" stroke="#5cb41e" stroke-width="1.3"/><path d="M11 0.6 L16 4.5 L11 8.4 Z" fill="#5cb41e"/></svg>
<svg style="left:577px;top:266.0px" width="16" height="9" viewBox="0 0 16 9"><path d="M0 4.5 H16" stroke="#d828c8" stroke-width="1.3"/></svg>
<svg style="left:563.5px;top:299.5px" width="16" height="12" viewBox="0 0 16 12"><path d="M0.6 2 Q0.6 0.6 2 0.6 H5 L6.2 2 H11.4 V4" fill="#fbe6b0" stroke="#c8872c" stroke-width="1"/><path d="M0.8 11.2 L3.6 4.4 H15 L12 11.2 Z" fill="#fdf2cc" stroke="#c8872c" stroke-width="1" stroke-linejoin="round"/><path d="M0.6 2 V11" stroke="#c8872c" stroke-width="1"/></svg>
<svg style="left:669px;top:302.5px" width="10" height="7" viewBox="0 0 10 7"><path d="M0.6 3.4 L3.6 0.6 V2.2 H5 V4.8 H3.6 V6.2 Z" fill="#fff" stroke="#707070" stroke-width="0.7"/><path d="M5.4 0.8 Q9.4 0.8 9.4 3.4 Q9.4 6 5.4 6 Z" fill="#fff" stroke="#707070" stroke-width="0.7"/></svg>
<svg style="left:577px;top:322px" width="17" height="16" viewBox="0 0 17 16"><rect x="0.8" y="0.8" width="13.4" height="10.8" fill="#fff" stroke="#3f62c8" stroke-width="1.3"/><rect x="0.8" y="0.8" width="13.4" height="3.4" fill="#5a8ae8"/><path d="M0.8 6.4 H14.2" stroke="#8aa8e8" stroke-width="1"/><rect x="7.6" y="7.6" width="7.8" height="8" fill="#f8fafc" stroke="#5a8a98" stroke-width="0.9"/><path d="M9.4 10 H13.6 M9.4 11.8 H13.6 M9.4 13.6 H13.6" stroke="#3a7a70" stroke-width="0.8"/></svg>
<svg style="left:577px;top:349px" width="17" height="16" viewBox="0 0 17 16"><rect x="0.8" y="0.8" width="13.4" height="10.8" fill="#fff" stroke="#6aa830" stroke-width="1.3"/><rect x="0.8" y="0.8" width="13.4" height="3.4" fill="#8cc850"/><path d="M0.8 6.4 H14.2" stroke="#a8d878" stroke-width="1"/><path d="M9.4 8.4 V14 Q9.4 15.4 12.6 15.4 Q15.8 15.4 15.8 14 V8.4 Z" fill="#f2b632" stroke="#c88a1c" stroke-width="0.9"/><ellipse cx="12.6" cy="8.4" rx="3.2" ry="1.4" fill="#fbe08a" stroke="#c88a1c" stroke-width="0.8"/></svg>
<svg style="left:578px;top:377px" width="16" height="14" viewBox="0 0 16 14"><rect x="0.8" y="0.8" width="11.6" height="8.6" fill="#fff" stroke="#a03cc0" stroke-width="1.3"/><rect x="0.8" y="0.8" width="11.6" height="2.8" fill="#b860d8"/><path d="M0.8 5.6 H12.4" stroke="#d8a8e8" stroke-width="1"/><circle cx="8.6" cy="8" r="2.8" fill="#d8ecfa" stroke="#7a98b8" stroke-width="0.9"/><path d="M10.8 10.2 L14 13.2" stroke="#b8903c" stroke-width="1.6" stroke-linecap="round"/></svg>
<svg style="left:577px;top:403px" width="17" height="16" viewBox="0 0 17 16"><path d="M0.8 3.4 H13.4 V12 L10.4 15 H0.8 Z" fill="#fbe78c" stroke="#b89428" stroke-width="1.1"/><path d="M13.4 12 H10.4 V15" fill="#f8f0c0" stroke="#b89428" stroke-width="0.9"/><path d="M5.6 11 L6.6 8 L13.6 1.4 L15.6 3.4 L8.6 10 Z" fill="#f0c8a0" stroke="#8a6a48" stroke-width="0.8"/><path d="M13.6 1.4 L15.6 3.4 L16.2 1.2 Z" fill="#e03828"/></svg>
<svg style="left:1650px;top:164.5px" width="17" height="16" viewBox="0 0 17 16"><path d="M1 3 Q1 1 3 1 L6 1 L8 3 L13 3 Q14 3 14 4 L14 12 L1 12 Z" fill="#f1d386" stroke="#c89b3c" stroke-width="1"/><rect x="6" y="5" width="6" height="6" fill="#6a4a3a"/><rect x="7.5" y="6" width="3" height="3" fill="#e8b838"/><rect x="4" y="10.5" width="5" height="5" fill="#2a3fae"/><rect x="5" y="11.5" width="3" height="3" fill="#86b8e8"/><text x="10.6" y="16" font-size="8" font-weight="bold" fill="#2a2aa8" font-family="Liberation Sans,sans-serif">?</text></svg>
</div></body></html>
